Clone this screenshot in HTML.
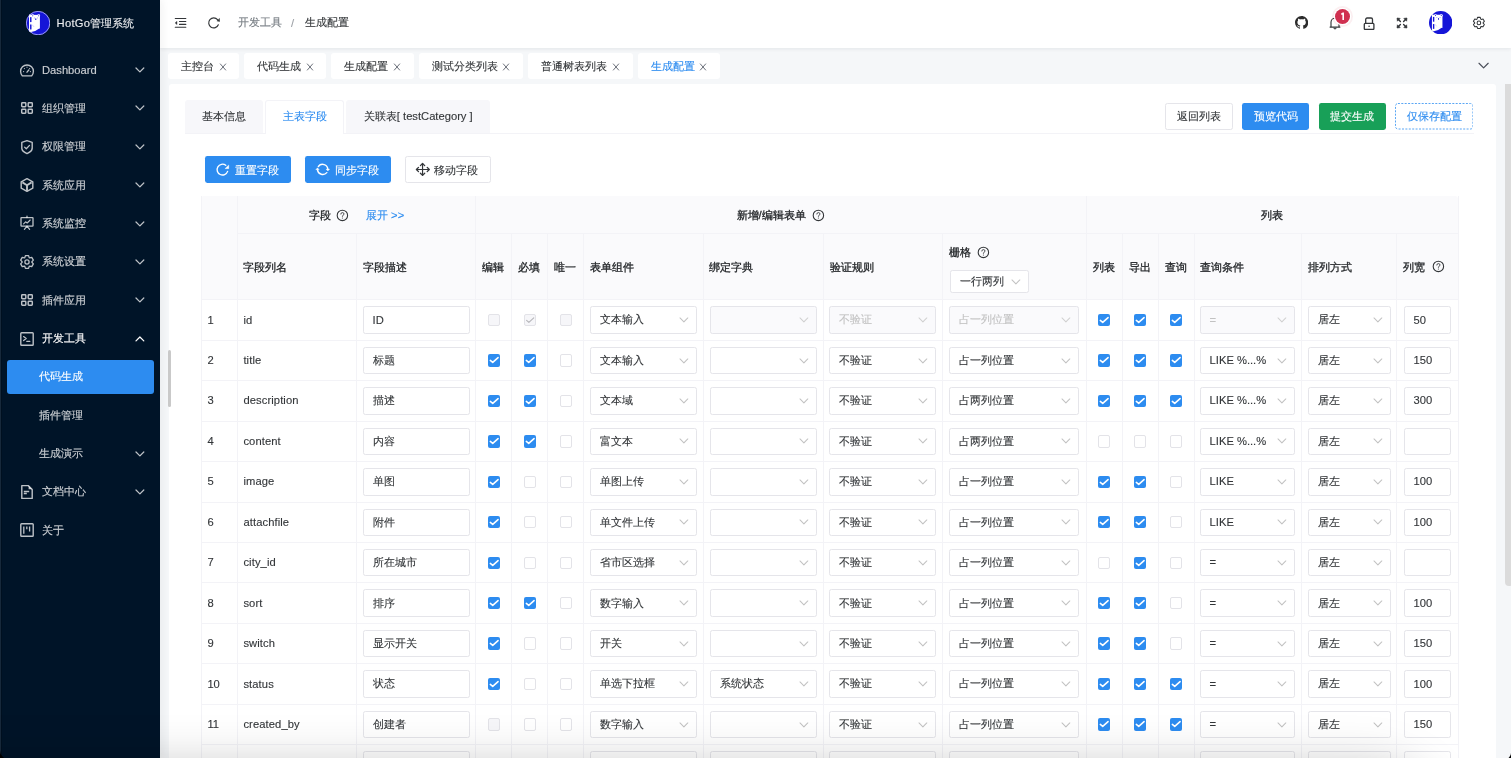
<!DOCTYPE html><html><head><meta charset="utf-8"><title>HotGo</title><style>html,body{margin:0;padding:0;}body{width:1511px;height:758px;overflow:hidden;position:relative;background:#f5f7f9;font-family:"Liberation Sans",sans-serif;font-size:11.2px;color:#333639;}div{box-sizing:border-box;-webkit-text-stroke:0.12px currentColor;}</style></head><body><div style="position:absolute;left:0;top:0;width:1511px;height:758px;will-change:transform;overflow:hidden;">
<div style="position:absolute;left:160px;top:0px;width:1351px;height:758px;background:#f5f7f9;"></div>
<div style="position:absolute;left:169px;top:84px;width:1327px;height:700px;background:#fff;border-radius:3px;"></div>
<div style="position:absolute;left:1505px;top:84px;width:8px;height:502px;background:#dbdbdb;border-radius:0 0 4px 4px;"></div>
<div style="position:absolute;left:160px;top:0px;width:1351px;height:48px;background:#fff;box-shadow:0 1px 4px rgba(0,21,41,0.08);"></div>
<div style="position:absolute;left:0px;top:0px;width:160px;height:758px;background:#001428;box-shadow:2px 0 8px rgba(29,35,41,0.06);"></div>
<svg style="position:absolute;left:25.9px;top:10.8px;" width="24.2" height="24.2" viewBox="0 0 100 100"><defs><clipPath id="lc1"><circle cx="50" cy="50" r="50"/></clipPath></defs><circle cx="50" cy="50" r="50" fill="#1515d8"/><g clip-path="url(#lc1)"><rect x="12.5" y="0" width="4.6" height="100" fill="#fff"/><rect x="16.8" y="16" width="40.7" height="56" fill="#fff"/><path d="M57.5 70 Q42 84 16.8 88 L16.8 68 Z" fill="#fff"/><circle cx="27.8" cy="19.4" r="5.9" fill="#fff"/><circle cx="52.6" cy="19.4" r="5.9" fill="#fff"/><circle cx="27.8" cy="19.4" r="2.3" fill="#1515d8"/><circle cx="52.6" cy="19.4" r="2.3" fill="#1515d8"/><circle cx="33.8" cy="28.7" r="1.5" fill="#1515d8"/><circle cx="47.2" cy="28.7" r="1.5" fill="#1515d8"/><ellipse cx="40.5" cy="33.8" rx="2.4" ry="3.6" fill="#1515d8"/><rect x="16.8" y="25.3" width="5.9" height="20.4" fill="#1515d8"/><rect x="16.8" y="55.8" width="5.9" height="20.5" fill="#1515d8"/><path d="M25 58 Q31 59 33 66" fill="none" stroke="#b8b8ee" stroke-width="2"/></g><circle cx="50" cy="50" r="48.5" fill="none" stroke="rgba(235,235,255,0.75)" stroke-width="3.5"/></svg>
<div style="position:absolute;left:56.6px;top:15.8px;line-height:14px;height:14px;white-space:nowrap;color:#eceef0;font-size:11.2px;"><span style="letter-spacing:0.25px">HotGo</span>管理系统</div>
<svg style="position:absolute;left:19.2px;top:62.85px;" width="16" height="16" viewBox="0 0 16 16"><path d="M3.45 12.9 A6.4 6.4 0 1 1 12.55 12.9 Z" fill="none" stroke="rgba(255,255,255,0.74)" stroke-width="1.4" stroke-linejoin="round"/><path d="M8 9.2 L9.8 7" stroke="rgba(255,255,255,0.74)" stroke-width="1.3" stroke-linecap="round"/><circle cx="8" cy="4.2" r="0.6" fill="rgba(255,255,255,0.74)"/><circle cx="4.6" cy="8.6" r="0.6" fill="rgba(255,255,255,0.74)"/><circle cx="11.4" cy="8.6" r="0.6" fill="rgba(255,255,255,0.74)"/><circle cx="5.4" cy="5.6" r="0.6" fill="rgba(255,255,255,0.74)"/><circle cx="10.6" cy="5.6" r="0.6" fill="rgba(255,255,255,0.74)"/></svg>
<div style="position:absolute;left:42px;top:63px;line-height:14px;height:14px;white-space:nowrap;color:rgba(255,255,255,0.76);">Dashboard</div>
<svg style="position:absolute;left:133.9px;top:64.1px" width="11.8" height="11.8" viewBox="-5.9 -5.9 11.8 11.8"><path d="M-3.9 -1.95 L0 1.95 L3.9 -1.95" fill="none" stroke="rgba(255,255,255,0.74)" stroke-width="1.25" stroke-linecap="round" stroke-linejoin="round"/></svg>
<svg style="position:absolute;left:19.2px;top:100.37px;" width="16" height="16" viewBox="0 0 16 16"><rect x="2.7" y="2.7" width="4.1" height="4.1" rx="0.7" fill="none" stroke="rgba(255,255,255,0.74)" stroke-width="1.45"/><rect x="2.7" y="9.2" width="4.1" height="4.1" rx="0.7" fill="none" stroke="rgba(255,255,255,0.74)" stroke-width="1.45"/><rect x="9.2" y="2.7" width="4.1" height="4.1" rx="0.7" fill="none" stroke="rgba(255,255,255,0.74)" stroke-width="1.45"/><rect x="9.2" y="9.2" width="4.1" height="4.1" rx="0.7" fill="none" stroke="rgba(255,255,255,0.74)" stroke-width="1.45"/></svg>
<div style="position:absolute;left:42px;top:100.77px;line-height:14px;height:14px;white-space:nowrap;color:rgba(255,255,255,0.76);">组织管理</div>
<svg style="position:absolute;left:133.9px;top:102.47px" width="11.8" height="11.8" viewBox="-5.9 -5.9 11.8 11.8"><path d="M-3.9 -1.95 L0 1.95 L3.9 -1.95" fill="none" stroke="rgba(255,255,255,0.74)" stroke-width="1.25" stroke-linecap="round" stroke-linejoin="round"/></svg>
<svg style="position:absolute;left:19.2px;top:138.74px;" width="16" height="16" viewBox="0 0 16 16"><path d="M8 1.6 L13.2 3.4 L13.2 9.4 Q13 12.4 8 14.6 Q3 12.4 2.8 9.4 L2.8 3.4 Z" fill="none" stroke="rgba(255,255,255,0.74)" stroke-width="1.4" stroke-linejoin="round"/><path d="M5.6 8.1 L7.3 9.8 L10.5 6.4" fill="none" stroke="rgba(255,255,255,0.74)" stroke-width="1.3" stroke-linecap="round" stroke-linejoin="round"/></svg>
<div style="position:absolute;left:42px;top:139.14px;line-height:14px;height:14px;white-space:nowrap;color:rgba(255,255,255,0.76);">权限管理</div>
<svg style="position:absolute;left:133.9px;top:140.84px" width="11.8" height="11.8" viewBox="-5.9 -5.9 11.8 11.8"><path d="M-3.9 -1.95 L0 1.95 L3.9 -1.95" fill="none" stroke="rgba(255,255,255,0.74)" stroke-width="1.25" stroke-linecap="round" stroke-linejoin="round"/></svg>
<svg style="position:absolute;left:19.2px;top:177.11px;" width="16" height="16" viewBox="0 0 16 16"><path d="M8 1.6 L13.8 4.8 L13.8 11.2 L8 14.4 L2.2 11.2 L2.2 4.8 Z" fill="none" stroke="rgba(255,255,255,0.74)" stroke-width="1.4" stroke-linejoin="round"/><path d="M3.4 5.4 L8 8.2 L12.6 5.4 M8 8.2 L8 13.6" fill="none" stroke="rgba(255,255,255,0.74)" stroke-width="1.9" stroke-linejoin="round"/></svg>
<div style="position:absolute;left:42px;top:177.51px;line-height:14px;height:14px;white-space:nowrap;color:rgba(255,255,255,0.76);">系统应用</div>
<svg style="position:absolute;left:133.9px;top:179.21px" width="11.8" height="11.8" viewBox="-5.9 -5.9 11.8 11.8"><path d="M-3.9 -1.95 L0 1.95 L3.9 -1.95" fill="none" stroke="rgba(255,255,255,0.74)" stroke-width="1.25" stroke-linecap="round" stroke-linejoin="round"/></svg>
<svg style="position:absolute;left:19.2px;top:215.48px;" width="16" height="16" viewBox="0 0 16 16"><rect x="2" y="2.6" width="12" height="8.6" rx="0.5" fill="none" stroke="rgba(255,255,255,0.74)" stroke-width="1.3"/><path d="M8 1 L8 2.6 M8 11.2 L5.4 14.4 M8 11.2 L10.6 14.4" stroke="rgba(255,255,255,0.74)" stroke-width="1.2" stroke-linecap="round"/><path d="M4.6 8.8 L6.6 6.8 L8.2 8 L11.2 5" fill="none" stroke="rgba(255,255,255,0.74)" stroke-width="1.1" stroke-linecap="round" stroke-linejoin="round"/></svg>
<div style="position:absolute;left:42px;top:215.88px;line-height:14px;height:14px;white-space:nowrap;color:rgba(255,255,255,0.76);">系统监控</div>
<svg style="position:absolute;left:133.9px;top:217.58px" width="11.8" height="11.8" viewBox="-5.9 -5.9 11.8 11.8"><path d="M-3.9 -1.95 L0 1.95 L3.9 -1.95" fill="none" stroke="rgba(255,255,255,0.74)" stroke-width="1.25" stroke-linecap="round" stroke-linejoin="round"/></svg>
<svg style="position:absolute;left:19.2px;top:253.85px;" width="16" height="16" viewBox="0 0 16 16"><path d="M6.43 1.59 L9.57 1.59 L10.18 3.61 L10.71 3.92 L12.77 3.44 L14.34 6.15 L12.89 7.69 L12.89 8.31 L14.34 9.85 L12.77 12.56 L10.71 12.08 L10.18 12.39 L9.57 14.41 L6.43 14.41 L5.82 12.39 L5.29 12.08 L3.23 12.56 L1.66 9.85 L3.11 8.31 L3.11 7.69 L1.66 6.15 L3.23 3.44 L5.29 3.92 L5.82 3.61 Z" fill="none" stroke="rgba(255,255,255,0.74)" stroke-width="1.3" stroke-linejoin="round"/><circle cx="8" cy="8" r="2.1" fill="none" stroke="rgba(255,255,255,0.74)" stroke-width="1.3"/></svg>
<div style="position:absolute;left:42px;top:254.25px;line-height:14px;height:14px;white-space:nowrap;color:rgba(255,255,255,0.76);">系统设置</div>
<svg style="position:absolute;left:133.9px;top:255.95px" width="11.8" height="11.8" viewBox="-5.9 -5.9 11.8 11.8"><path d="M-3.9 -1.95 L0 1.95 L3.9 -1.95" fill="none" stroke="rgba(255,255,255,0.74)" stroke-width="1.25" stroke-linecap="round" stroke-linejoin="round"/></svg>
<svg style="position:absolute;left:19.2px;top:292.22px;" width="16" height="16" viewBox="0 0 16 16"><rect x="2.7" y="2.7" width="4.1" height="4.1" rx="0.7" fill="none" stroke="rgba(255,255,255,0.74)" stroke-width="1.45"/><rect x="2.7" y="9.2" width="4.1" height="4.1" rx="0.7" fill="none" stroke="rgba(255,255,255,0.74)" stroke-width="1.45"/><rect x="9.2" y="2.7" width="4.1" height="4.1" rx="0.7" fill="none" stroke="rgba(255,255,255,0.74)" stroke-width="1.45"/><rect x="9.2" y="9.2" width="4.1" height="4.1" rx="0.7" fill="none" stroke="rgba(255,255,255,0.74)" stroke-width="1.45"/></svg>
<div style="position:absolute;left:42px;top:292.62px;line-height:14px;height:14px;white-space:nowrap;color:rgba(255,255,255,0.76);">插件应用</div>
<svg style="position:absolute;left:133.9px;top:294.32px" width="11.8" height="11.8" viewBox="-5.9 -5.9 11.8 11.8"><path d="M-3.9 -1.95 L0 1.95 L3.9 -1.95" fill="none" stroke="rgba(255,255,255,0.74)" stroke-width="1.25" stroke-linecap="round" stroke-linejoin="round"/></svg>
<svg style="position:absolute;left:19.2px;top:330.59px;" width="16" height="16" viewBox="0 0 16 16"><rect x="1.8" y="1.8" width="12.4" height="12.4" rx="0.8" fill="none" stroke="rgba(255,255,255,0.74)" stroke-width="1.4"/><path d="M4.6 5.6 L7.2 7.6 L4.6 9.6 M7.8 10.4 L10.8 10.4" fill="none" stroke="rgba(255,255,255,0.74)" stroke-width="1.25" stroke-linecap="round" stroke-linejoin="round"/></svg>
<div style="position:absolute;left:42px;top:330.99px;line-height:14px;height:14px;white-space:nowrap;color:#fff;">开发工具</div>
<svg style="position:absolute;left:133.9px;top:332.69px" width="11.8" height="11.8" viewBox="-5.9 -5.9 11.8 11.8"><path d="M-3.9 1.95 L0 -1.95 L3.9 1.95" fill="none" stroke="#fff" stroke-width="1.25" stroke-linecap="round" stroke-linejoin="round"/></svg>
<div style="position:absolute;left:7px;top:360.36px;width:147px;height:33.2px;background:#2d8cf0;border-radius:3px;"></div>
<div style="position:absolute;left:39px;top:369.36px;line-height:14px;height:14px;white-space:nowrap;color:#fff;">代码生成</div>
<div style="position:absolute;left:39px;top:407.73px;line-height:14px;height:14px;white-space:nowrap;color:rgba(255,255,255,0.76);">插件管理</div>
<div style="position:absolute;left:39px;top:446.1px;line-height:14px;height:14px;white-space:nowrap;color:rgba(255,255,255,0.76);">生成演示</div>
<svg style="position:absolute;left:133.9px;top:447.8px" width="11.8" height="11.8" viewBox="-5.9 -5.9 11.8 11.8"><path d="M-3.9 -1.95 L0 1.95 L3.9 -1.95" fill="none" stroke="rgba(255,255,255,0.74)" stroke-width="1.25" stroke-linecap="round" stroke-linejoin="round"/></svg>
<svg style="position:absolute;left:19.2px;top:484.07px;" width="16" height="16" viewBox="0 0 16 16"><path d="M2.8 1.6 L9.2 1.6 L13.2 5.6 L13.2 14.4 L2.8 14.4 Z" fill="none" stroke="rgba(255,255,255,0.74)" stroke-width="1.4" stroke-linejoin="round"/><path d="M9.6 1.8 L9.6 5.2 L13 5.2 Z" fill="rgba(255,255,255,0.74)"/><path d="M4.8 7.4 L10.2 7.4 M4.8 9.4 L7.8 9.4" fill="none" stroke="rgba(255,255,255,0.74)" stroke-width="1.5"/></svg>
<div style="position:absolute;left:42px;top:484.47px;line-height:14px;height:14px;white-space:nowrap;color:rgba(255,255,255,0.76);">文档中心</div>
<svg style="position:absolute;left:133.9px;top:486.17px" width="11.8" height="11.8" viewBox="-5.9 -5.9 11.8 11.8"><path d="M-3.9 -1.95 L0 1.95 L3.9 -1.95" fill="none" stroke="rgba(255,255,255,0.74)" stroke-width="1.25" stroke-linecap="round" stroke-linejoin="round"/></svg>
<svg style="position:absolute;left:19.2px;top:522.44px;" width="16" height="16" viewBox="0 0 16 16"><rect x="1.8" y="1.8" width="12.4" height="12.4" rx="0.8" fill="none" stroke="rgba(255,255,255,0.74)" stroke-width="1.4"/><path d="M4.8 4.6 L4.8 11.8 M7.8 4.6 L7.8 7.2 M10.6 4.6 L10.6 9.6" fill="none" stroke="rgba(255,255,255,0.74)" stroke-width="1.3"/></svg>
<div style="position:absolute;left:42px;top:522.84px;line-height:14px;height:14px;white-space:nowrap;color:rgba(255,255,255,0.76);">关于</div>
<div style="position:absolute;left:168px;top:350px;width:3px;height:57px;background:#c9c9c9;border-radius:2px;"></div>
<svg style="position:absolute;left:170px;top:12px;" width="20" height="20" viewBox="0 0 20 20"><path d="M5.3 6.5 L15.8 6.5 M9.5 9.45 L15.8 9.45 M9.5 12.4 L15.8 12.4 M5.3 15.2 L15.8 15.2" stroke="#333639" stroke-width="1.15" stroke-linecap="round"/><path d="M7 9.3 L7 12.6 L5.1 10.95 Z" fill="#333639" stroke="#333639" stroke-width="0.4" stroke-linejoin="round"/></svg>
<svg style="position:absolute;left:200px;top:12px;" width="20" height="20" viewBox="0 0 20 20"><path d="M18.34 12.77 A5 5 0 1 1 17.53 7.69" fill="none" stroke="#333639" stroke-width="1.15" stroke-linecap="round"/><path d="M16.9 8.9 L19.5 6.4 L19.7 9.4 Z" fill="#333639" stroke="#333639" stroke-width="0.5" stroke-linejoin="round"/></svg>
<div style="position:absolute;left:237.5px;top:15.1px;line-height:14px;height:14px;white-space:nowrap;color:#767c82;">开发工具</div>
<div style="position:absolute;left:291px;top:15.7px;line-height:14px;height:14px;white-space:nowrap;color:#9a9ea4;">/</div>
<div style="position:absolute;left:305px;top:15.1px;line-height:14px;height:14px;white-space:nowrap;color:#333639;">生成配置</div>
<svg style="position:absolute;left:1294.8px;top:16.2px;" width="13.2" height="13.2" viewBox="0 0 16 16"><path fill="#2c2c2c" d="M8 0C3.58 0 0 3.58 0 8c0 3.54 2.29 6.53 5.47 7.59.4.07.55-.17.55-.38 0-.19-.01-.82-.01-1.49-2.01.37-2.53-.49-2.69-.94-.09-.23-.48-.94-.82-1.13-.28-.15-.68-.52-.01-.53.63-.01 1.08.58 1.23.82.72 1.21 1.87.87 2.33.66.07-.52.28-.87.51-1.07-1.78-.2-3.64-.89-3.64-3.95 0-.87.31-1.59.82-2.15-.08-.2-.36-1.02.08-2.12 0 0 .67-.21 2.2.82.64-.18 1.32-.27 2-.27.68 0 1.36.09 2 .27 1.53-1.04 2.2-.82 2.2-.82.44 1.1.16 1.92.08 2.12.51.56.82 1.27.82 2.15 0 3.07-1.87 3.75-3.65 3.95.29.25.54.73.54 1.48 0 1.07-.01 1.93-.01 2.2 0 .21.15.46.55.38A8.013 8.013 0 0016 8c0-4.42-3.58-8-8-8z"/></svg>
<svg style="position:absolute;left:1328px;top:14px;" width="14" height="16" viewBox="0 0 14 16"><path d="M3 13.1 L3 8.2 A4 4 0 0 1 11 8.2 L11 13.1" fill="none" stroke="#333639" stroke-width="1.15"/><path d="M2.1 13.1 L11.9 13.1" stroke="#333639" stroke-width="1.2" stroke-linecap="round"/><path d="M5.6 14.2 L7 15.2 L8.4 14.2 Z" fill="#333639" stroke="#333639" stroke-width="0.6" stroke-linejoin="round"/></svg>
<div style="position:absolute;left:1334.9px;top:9.1px;width:15.2px;height:15.2px;background:#d03050;border-radius:50%;box-shadow:0 0 0 1.2px #fff, 0 0 0 3px rgba(208,48,80,0.08);"><svg width="15.2" height="15.2" viewBox="0 0 15.2 15.2" style="position:absolute;left:0;top:0"><path d="M6.3 5.4 L8.2 4.1 L8.2 10.9" fill="none" stroke="#fff" stroke-width="1.6" stroke-linejoin="round"/></svg></div>
<svg style="position:absolute;left:1361.5px;top:15.6px;" width="14" height="14" viewBox="0 0 14 14"><rect x="2.3" y="7.3" width="9.6" height="6.2" rx="1" fill="none" stroke="#333639" stroke-width="1.3"/><path d="M3.7 7.3 L3.7 3.4 A1.4 1.4 0 0 1 5.1 2 L9.1 2 A1.4 1.4 0 0 1 10.5 3.4 L10.5 7.3" fill="none" stroke="#333639" stroke-width="1.3"/><circle cx="7.1" cy="10.3" r="0.8" fill="#333639"/></svg>
<svg style="position:absolute;left:1394px;top:14.85px;" width="16" height="16" viewBox="0 0 16 16"><path d="M6.4 6.4 L4 4 M9.6 6.4 L12 4 M6.4 9.6 L4 12 M9.6 9.6 L12 12" stroke="#333639" stroke-width="1.4" stroke-linecap="round"/><path d="M3 3 L6.2 3.4 L3.4 6.2 Z M13 3 L9.8 3.4 L12.6 6.2 Z M3 13 L6.2 12.6 L3.4 9.8 Z M13 13 L9.8 12.6 L12.6 9.8 Z" fill="#333639" stroke="#333639" stroke-width="0.6" stroke-linejoin="round"/></svg>
<svg style="position:absolute;left:1428.95px;top:10.75px;" width="23.4" height="23.4" viewBox="0 0 100 100"><defs><clipPath id="lc2"><circle cx="50" cy="50" r="50"/></clipPath></defs><circle cx="50" cy="50" r="50" fill="#1515d8"/><g clip-path="url(#lc2)"><rect x="12.5" y="0" width="4.6" height="100" fill="#fff"/><rect x="16.8" y="16" width="40.7" height="56" fill="#fff"/><path d="M57.5 70 Q42 84 16.8 88 L16.8 68 Z" fill="#fff"/><circle cx="27.8" cy="19.4" r="5.9" fill="#fff"/><circle cx="52.6" cy="19.4" r="5.9" fill="#fff"/><circle cx="27.8" cy="19.4" r="2.3" fill="#1515d8"/><circle cx="52.6" cy="19.4" r="2.3" fill="#1515d8"/><circle cx="33.8" cy="28.7" r="1.5" fill="#1515d8"/><circle cx="47.2" cy="28.7" r="1.5" fill="#1515d8"/><ellipse cx="40.5" cy="33.8" rx="2.4" ry="3.6" fill="#1515d8"/><rect x="16.8" y="25.3" width="5.9" height="20.4" fill="#1515d8"/><rect x="16.8" y="55.8" width="5.9" height="20.5" fill="#1515d8"/><path d="M25 58 Q31 59 33 66" fill="none" stroke="#b8b8ee" stroke-width="2"/></g></svg>
<svg style="position:absolute;left:1472px;top:16.2px;" width="13.8" height="13.8" viewBox="0 0 16 16"><path d="M6.43 1.59 L9.57 1.59 L10.18 3.61 L10.71 3.92 L12.77 3.44 L14.34 6.15 L12.89 7.69 L12.89 8.31 L14.34 9.85 L12.77 12.56 L10.71 12.08 L10.18 12.39 L9.57 14.41 L6.43 14.41 L5.82 12.39 L5.29 12.08 L3.23 12.56 L1.66 9.85 L3.11 8.31 L3.11 7.69 L1.66 6.15 L3.23 3.44 L5.29 3.92 L5.82 3.61 Z" fill="none" stroke="#333639" stroke-width="1.2" stroke-linejoin="round"/><circle cx="8" cy="8" r="2.1" fill="none" stroke="#333639" stroke-width="1.2"/></svg>
<div style="position:absolute;left:168.1px;top:53.2px;width:70.9px;height:25.6px;background:#fff;border-radius:3px;"></div>
<div style="position:absolute;left:181.3px;top:58.8px;line-height:14px;height:14px;white-space:nowrap;color:#333639;">主控台</div>
<svg style="position:absolute;left:217.65px;top:61.9px;" width="10" height="10" viewBox="0 0 10 10"><path d="M2.35 1.95 L7.65 8.05 M7.65 1.95 L2.35 8.05" stroke="#6c717b" stroke-width="1" stroke-linecap="round"/></svg>
<div style="position:absolute;left:244.2px;top:53.2px;width:82.2px;height:25.6px;background:#fff;border-radius:3px;"></div>
<div style="position:absolute;left:257.4px;top:58.8px;line-height:14px;height:14px;white-space:nowrap;color:#333639;">代码生成</div>
<svg style="position:absolute;left:305.05px;top:61.9px;" width="10" height="10" viewBox="0 0 10 10"><path d="M2.35 1.95 L7.65 8.05 M7.65 1.95 L2.35 8.05" stroke="#6c717b" stroke-width="1" stroke-linecap="round"/></svg>
<div style="position:absolute;left:331px;top:53.2px;width:82.7px;height:25.6px;background:#fff;border-radius:3px;"></div>
<div style="position:absolute;left:344.2px;top:58.8px;line-height:14px;height:14px;white-space:nowrap;color:#333639;">生成配置</div>
<svg style="position:absolute;left:392.35px;top:61.9px;" width="10" height="10" viewBox="0 0 10 10"><path d="M2.35 1.95 L7.65 8.05 M7.65 1.95 L2.35 8.05" stroke="#6c717b" stroke-width="1" stroke-linecap="round"/></svg>
<div style="position:absolute;left:418.9px;top:53.2px;width:103.8px;height:25.6px;background:#fff;border-radius:3px;"></div>
<div style="position:absolute;left:432.1px;top:58.8px;line-height:14px;height:14px;white-space:nowrap;color:#333639;">测试分类列表</div>
<svg style="position:absolute;left:501.35px;top:61.9px;" width="10" height="10" viewBox="0 0 10 10"><path d="M2.35 1.95 L7.65 8.05 M7.65 1.95 L2.35 8.05" stroke="#6c717b" stroke-width="1" stroke-linecap="round"/></svg>
<div style="position:absolute;left:528.2px;top:53.2px;width:104.6px;height:25.6px;background:#fff;border-radius:3px;"></div>
<div style="position:absolute;left:541.4px;top:58.8px;line-height:14px;height:14px;white-space:nowrap;color:#333639;">普通树表列表</div>
<svg style="position:absolute;left:611.45px;top:61.9px;" width="10" height="10" viewBox="0 0 10 10"><path d="M2.35 1.95 L7.65 8.05 M7.65 1.95 L2.35 8.05" stroke="#6c717b" stroke-width="1" stroke-linecap="round"/></svg>
<div style="position:absolute;left:637.7px;top:53.2px;width:81.9px;height:25.6px;background:#fff;border-radius:3px;"></div>
<div style="position:absolute;left:650.9px;top:58.8px;line-height:14px;height:14px;white-space:nowrap;color:#2d8cf0;">生成配置</div>
<svg style="position:absolute;left:698.25px;top:61.9px;" width="10" height="10" viewBox="0 0 10 10"><path d="M2.35 1.95 L7.65 8.05 M7.65 1.95 L2.35 8.05" stroke="#6c717b" stroke-width="1" stroke-linecap="round"/></svg>
<svg style="position:absolute;left:1477px;top:59.2px" width="13.2" height="13.2" viewBox="-6.6 -6.6 13.2 13.2"><path d="M-4.6 -2.3 L0 2.3 L4.6 -2.3" fill="none" stroke="#4a4f5a" stroke-width="1.2" stroke-linecap="round" stroke-linejoin="round"/></svg>
<div style="position:absolute;left:185px;top:133px;width:1288.5px;height:1px;background:#f3f3f7;"></div>
<div style="position:absolute;left:184.7px;top:99.7px;width:78.1px;height:33.3px;background:#f7f7fa;border-radius:3px 3px 0 0;"></div>
<div style="position:absolute;left:73.75px;top:109.2px;width:300px;text-align:center;line-height:14px;height:14px;white-space:nowrap;color:#333639;">基本信息</div>
<div style="position:absolute;left:265.3px;top:99.7px;width:78.6px;height:34.3px;background:#fff;border:1px solid #f3f3f7;border-bottom:none;border-radius:3px 3px 0 0;"></div>
<div style="position:absolute;left:154.6px;top:109.2px;width:300px;text-align:center;line-height:14px;height:14px;white-space:nowrap;color:#2d8cf0;">主表字段</div>
<div style="position:absolute;left:346.4px;top:99.7px;width:143.7px;height:33.3px;background:#f7f7fa;border-radius:3px 3px 0 0;"></div>
<div style="position:absolute;left:268.25px;top:109.2px;width:300px;text-align:center;line-height:14px;height:14px;white-space:nowrap;color:#333639;">关联表[ testCategory ]</div>
<div style="position:absolute;left:1165.3px;top:103px;width:67.3px;height:26.5px;background:#fff;border:1px solid #e5e5ea;border-radius:2.4px;"></div>
<div style="position:absolute;left:1048.95px;top:108.7px;width:300px;text-align:center;line-height:14px;height:14px;white-space:nowrap;color:#333639;">返回列表</div>
<div style="position:absolute;left:1242px;top:103px;width:67.3px;height:26.5px;background:#2d8cf0;border-radius:2.4px;"></div>
<div style="position:absolute;left:1125.65px;top:108.7px;width:300px;text-align:center;line-height:14px;height:14px;white-space:nowrap;color:#fff;">预览代码</div>
<div style="position:absolute;left:1318.8px;top:103px;width:67.2px;height:26.5px;background:#18a058;border-radius:2.4px;"></div>
<div style="position:absolute;left:1202.4px;top:108.7px;width:300px;text-align:center;line-height:14px;height:14px;white-space:nowrap;color:#fff;">提交生成</div>
<div style="position:absolute;left:1395px;top:103px;width:78.4px;height:26.5px;background:#fff;"><svg width="78.4" height="26.5" style="position:absolute;left:0;top:0"><rect x="0.5" y="0.5" width="77.4" height="25.5" rx="2.4" fill="none" stroke="#5aa6f4" stroke-width="1" stroke-dasharray="2 1.4"/></svg></div>
<div style="position:absolute;left:1284.2px;top:108.7px;width:300px;text-align:center;line-height:14px;height:14px;white-space:nowrap;color:#2d8cf0;">仅保存配置</div>
<div style="position:absolute;left:204.7px;top:156.1px;width:86.2px;height:27.2px;background:#2d8cf0;border-radius:2.4px;"></div>
<svg style="position:absolute;left:213px;top:160px;" width="20" height="20" viewBox="0 0 20 20"><path d="M14.61 11.36 A5.4 5.4 0 1 1 12.75 5.29" fill="none" stroke="#fff" stroke-width="1.35" stroke-linecap="round"/><path d="M15.8 4.9 L15.8 8.7 L11.9 8.7 Z" fill="#fff" stroke="#fff" stroke-width="0.3" stroke-linejoin="round"/></svg>
<div style="position:absolute;left:235.4px;top:163.1px;line-height:14px;height:14px;white-space:nowrap;color:#fff;">重置字段</div>
<div style="position:absolute;left:304.6px;top:156.1px;width:86.2px;height:27.2px;background:#2d8cf0;border-radius:2.4px;"></div>
<svg style="position:absolute;left:312px;top:160px;" width="20" height="20" viewBox="0 0 20 20"><path d="M6.3 6.5 A5.3 5.3 0 0 1 15.85 9.4" fill="none" stroke="#fff" stroke-width="1.35" stroke-linecap="round"/><path d="M14.8 12.6 A5.3 5.3 0 0 1 5.5 9.8" fill="none" stroke="#fff" stroke-width="1.35" stroke-linecap="round"/><path d="M14.1 9.1 L17.6 9.1 L15.85 11 Z M3.8 9.7 L7.2 9.7 L5.5 7.8 Z" fill="#fff" stroke="#fff" stroke-width="0.4" stroke-linejoin="round"/></svg>
<div style="position:absolute;left:335.4px;top:163.1px;line-height:14px;height:14px;white-space:nowrap;color:#fff;">同步字段</div>
<div style="position:absolute;left:404.5px;top:156.1px;width:86.2px;height:27.2px;background:#fff;border:1px solid #e5e5ea;border-radius:2.4px;"></div>
<svg style="position:absolute;left:412px;top:160px;" width="20" height="20" viewBox="0 0 20 20"><path d="M10.55 3.5 L10.55 15.4 M4.5 9.5 L17.2 9.5" stroke="#333639" stroke-width="1.2"/><path d="M8.4 5.6 L10.55 3.5 L12.7 5.6 M8.4 13.3 L10.55 15.4 L12.7 13.3 M6.5 7.35 L4.4 9.5 L6.5 11.65 M15.2 7.35 L17.3 9.5 L15.2 11.65" fill="none" stroke="#333639" stroke-width="1.3" stroke-linecap="round" stroke-linejoin="round"/></svg>
<div style="position:absolute;left:434.4px;top:163.1px;line-height:14px;height:14px;white-space:nowrap;color:#333639;">移动字段</div>
<div style="position:absolute;left:201px;top:196.3px;width:1257px;height:103.5px;background:#fafafc;border-radius:3px 3px 0 0;"></div>
<div style="position:absolute;left:237px;top:233px;width:1221px;height:1px;background:#f3f3f7;"></div>
<div style="position:absolute;left:201px;top:299px;width:1257px;height:1px;background:#f3f3f7;"></div>
<div style="position:absolute;left:201px;top:340px;width:1257px;height:1px;background:#f3f3f7;"></div>
<div style="position:absolute;left:201px;top:380px;width:1257px;height:1px;background:#f3f3f7;"></div>
<div style="position:absolute;left:201px;top:421px;width:1257px;height:1px;background:#f3f3f7;"></div>
<div style="position:absolute;left:201px;top:461px;width:1257px;height:1px;background:#f3f3f7;"></div>
<div style="position:absolute;left:201px;top:502px;width:1257px;height:1px;background:#f3f3f7;"></div>
<div style="position:absolute;left:201px;top:542px;width:1257px;height:1px;background:#f3f3f7;"></div>
<div style="position:absolute;left:201px;top:582px;width:1257px;height:1px;background:#f3f3f7;"></div>
<div style="position:absolute;left:201px;top:623px;width:1257px;height:1px;background:#f3f3f7;"></div>
<div style="position:absolute;left:201px;top:663px;width:1257px;height:1px;background:#f3f3f7;"></div>
<div style="position:absolute;left:201px;top:704px;width:1257px;height:1px;background:#f3f3f7;"></div>
<div style="position:absolute;left:201px;top:744px;width:1257px;height:1px;background:#f3f3f7;"></div>
<div style="position:absolute;left:201px;top:785px;width:1257px;height:1px;background:#f3f3f7;"></div>
<div style="position:absolute;left:201px;top:196px;width:1px;height:589px;background:#f3f3f7;"></div>
<div style="position:absolute;left:237px;top:196px;width:1px;height:589px;background:#f3f3f7;"></div>
<div style="position:absolute;left:475px;top:196px;width:1px;height:589px;background:#f3f3f7;"></div>
<div style="position:absolute;left:1086px;top:196px;width:1px;height:589px;background:#f3f3f7;"></div>
<div style="position:absolute;left:1458px;top:196px;width:1px;height:589px;background:#f3f3f7;"></div>
<div style="position:absolute;left:356px;top:233px;width:1px;height:552px;background:#f3f3f7;"></div>
<div style="position:absolute;left:511px;top:233px;width:1px;height:552px;background:#f3f3f7;"></div>
<div style="position:absolute;left:547px;top:233px;width:1px;height:552px;background:#f3f3f7;"></div>
<div style="position:absolute;left:583px;top:233px;width:1px;height:552px;background:#f3f3f7;"></div>
<div style="position:absolute;left:703px;top:233px;width:1px;height:552px;background:#f3f3f7;"></div>
<div style="position:absolute;left:823px;top:233px;width:1px;height:552px;background:#f3f3f7;"></div>
<div style="position:absolute;left:942px;top:233px;width:1px;height:552px;background:#f3f3f7;"></div>
<div style="position:absolute;left:1122px;top:233px;width:1px;height:552px;background:#f3f3f7;"></div>
<div style="position:absolute;left:1158px;top:233px;width:1px;height:552px;background:#f3f3f7;"></div>
<div style="position:absolute;left:1194px;top:233px;width:1px;height:552px;background:#f3f3f7;"></div>
<div style="position:absolute;left:1301px;top:233px;width:1px;height:552px;background:#f3f3f7;"></div>
<div style="position:absolute;left:1396px;top:233px;width:1px;height:552px;background:#f3f3f7;"></div>
<div style="position:absolute;left:308.6px;top:208px;line-height:14px;height:14px;white-space:nowrap;color:#1f2225;-webkit-text-stroke:0.3px #1f2225;">字段</div>
<svg style="position:absolute;left:336px;top:209.2px;" width="12.8" height="12.8" viewBox="0 0 16 16"><circle cx="8" cy="8" r="6.5" fill="none" stroke="#333639" stroke-width="1.35"/><path d="M6 6.3 Q6 4.5 8 4.5 Q10 4.5 10 6.2 Q10 7.3 8.8 7.8 Q8 8.2 8 9.2" fill="none" stroke="#333639" stroke-width="1.1" stroke-linecap="round"/><circle cx="8" cy="11.2" r="0.7" fill="#333639"/></svg>
<div style="position:absolute;left:366px;top:208px;line-height:14px;height:14px;white-space:nowrap;color:#2d8cf0;">展开 &gt;&gt;</div>
<div style="position:absolute;left:736.6px;top:208px;line-height:14px;height:14px;white-space:nowrap;color:#1f2225;-webkit-text-stroke:0.3px #1f2225;">新增/编辑表单</div>
<svg style="position:absolute;left:812.1px;top:209.2px;" width="12.8" height="12.8" viewBox="0 0 16 16"><circle cx="8" cy="8" r="6.5" fill="none" stroke="#333639" stroke-width="1.35"/><path d="M6 6.3 Q6 4.5 8 4.5 Q10 4.5 10 6.2 Q10 7.3 8.8 7.8 Q8 8.2 8 9.2" fill="none" stroke="#333639" stroke-width="1.1" stroke-linecap="round"/><circle cx="8" cy="11.2" r="0.7" fill="#333639"/></svg>
<div style="position:absolute;left:1122.2px;top:208px;width:300px;text-align:center;line-height:14px;height:14px;white-space:nowrap;color:#1f2225;-webkit-text-stroke:0.3px #1f2225;">列表</div>
<div style="position:absolute;left:243.4px;top:259.9px;line-height:14px;height:14px;white-space:nowrap;color:#1f2225;-webkit-text-stroke:0.3px #1f2225;">字段列名</div>
<div style="position:absolute;left:363.1px;top:259.9px;line-height:14px;height:14px;white-space:nowrap;color:#1f2225;-webkit-text-stroke:0.3px #1f2225;">字段描述</div>
<div style="position:absolute;left:481.9px;top:259.9px;line-height:14px;height:14px;white-space:nowrap;color:#1f2225;-webkit-text-stroke:0.3px #1f2225;">编辑</div>
<div style="position:absolute;left:517.7px;top:259.9px;line-height:14px;height:14px;white-space:nowrap;color:#1f2225;-webkit-text-stroke:0.3px #1f2225;">必填</div>
<div style="position:absolute;left:553.8px;top:259.9px;line-height:14px;height:14px;white-space:nowrap;color:#1f2225;-webkit-text-stroke:0.3px #1f2225;">唯一</div>
<div style="position:absolute;left:589.7px;top:259.9px;line-height:14px;height:14px;white-space:nowrap;color:#1f2225;-webkit-text-stroke:0.3px #1f2225;">表单组件</div>
<div style="position:absolute;left:709.4px;top:259.9px;line-height:14px;height:14px;white-space:nowrap;color:#1f2225;-webkit-text-stroke:0.3px #1f2225;">绑定字典</div>
<div style="position:absolute;left:829.6px;top:259.9px;line-height:14px;height:14px;white-space:nowrap;color:#1f2225;-webkit-text-stroke:0.3px #1f2225;">验证规则</div>
<div style="position:absolute;left:1092.8px;top:259.9px;line-height:14px;height:14px;white-space:nowrap;color:#1f2225;-webkit-text-stroke:0.3px #1f2225;">列表</div>
<div style="position:absolute;left:1128.8px;top:259.9px;line-height:14px;height:14px;white-space:nowrap;color:#1f2225;-webkit-text-stroke:0.3px #1f2225;">导出</div>
<div style="position:absolute;left:1164.5px;top:259.9px;line-height:14px;height:14px;white-space:nowrap;color:#1f2225;-webkit-text-stroke:0.3px #1f2225;">查询</div>
<div style="position:absolute;left:1200.4px;top:259.9px;line-height:14px;height:14px;white-space:nowrap;color:#1f2225;-webkit-text-stroke:0.3px #1f2225;">查询条件</div>
<div style="position:absolute;left:1308px;top:259.9px;line-height:14px;height:14px;white-space:nowrap;color:#1f2225;-webkit-text-stroke:0.3px #1f2225;">排列方式</div>
<div style="position:absolute;left:1403px;top:259.9px;line-height:14px;height:14px;white-space:nowrap;color:#1f2225;-webkit-text-stroke:0.3px #1f2225;">列宽</div>
<svg style="position:absolute;left:1432.2px;top:260.2px;" width="12.8" height="12.8" viewBox="0 0 16 16"><circle cx="8" cy="8" r="6.5" fill="none" stroke="#333639" stroke-width="1.35"/><path d="M6 6.3 Q6 4.5 8 4.5 Q10 4.5 10 6.2 Q10 7.3 8.8 7.8 Q8 8.2 8 9.2" fill="none" stroke="#333639" stroke-width="1.1" stroke-linecap="round"/><circle cx="8" cy="11.2" r="0.7" fill="#333639"/></svg>
<div style="position:absolute;left:948.7px;top:244.9px;line-height:14px;height:14px;white-space:nowrap;color:#1f2225;-webkit-text-stroke:0.3px #1f2225;">栅格</div>
<svg style="position:absolute;left:977.2px;top:246.1px;" width="12.8" height="12.8" viewBox="0 0 16 16"><circle cx="8" cy="8" r="6.5" fill="none" stroke="#333639" stroke-width="1.35"/><path d="M6 6.3 Q6 4.5 8 4.5 Q10 4.5 10 6.2 Q10 7.3 8.8 7.8 Q8 8.2 8 9.2" fill="none" stroke="#333639" stroke-width="1.1" stroke-linecap="round"/><circle cx="8" cy="11.2" r="0.7" fill="#333639"/></svg>
<div style="position:absolute;left:949.7px;top:270.4px;width:79.7px;height:22.4px;box-sizing:border-box;border:1px solid #e5e5ea;border-radius:2.4px;background:#fff;"></div>
<div style="position:absolute;left:959.8px;top:274px;line-height:14px;height:14px;white-space:nowrap;color:#333639;">一行两列</div>
<svg style="position:absolute;left:1009.9px;top:275.7px" width="11.8" height="11.8" viewBox="-5.9 -5.9 11.8 11.8"><path d="M-3.9 -1.95 L0 1.95 L3.9 -1.95" fill="none" stroke="#c2c2c2" stroke-width="1.05" stroke-linecap="round" stroke-linejoin="round"/></svg>
<div style="position:absolute;left:207.4px;top:312.53px;line-height:14px;height:14px;white-space:nowrap;">1</div>
<div style="position:absolute;left:243.4px;top:312.53px;line-height:14px;height:14px;white-space:nowrap;letter-spacing:0.1px;">id</div>
<div style="position:absolute;left:363px;top:306.33px;width:107px;height:27.4px;box-sizing:border-box;border:1px solid #e5e5ea;border-radius:2.4px;background:#fff;"></div>
<div style="position:absolute;left:372.6px;top:312.53px;line-height:14px;height:14px;white-space:nowrap;color:#333639;">ID</div>
<div style="position:absolute;left:487.7px;top:313.83px;width:12.4px;height:12.4px;box-sizing:border-box;border:1px solid #e3e3e8;border-radius:2px;background:#f6f6f9;"></div>
<div style="position:absolute;left:523.65px;top:313.83px;width:12.4px;height:12.4px;box-sizing:border-box;border:1px solid #e3e3e8;border-radius:2px;background:#f6f6f9;"><svg width="12.4" height="12.4" viewBox="0 0 16 16" style="position:absolute;left:-1px;top:-1px"><path d="M3.4 8.3 L6.3 10.8 L12.6 5" fill="none" stroke="#b4b4b8" stroke-width="1.4" stroke-linecap="round" stroke-linejoin="round"/></svg></div>
<div style="position:absolute;left:559.65px;top:313.83px;width:12.4px;height:12.4px;box-sizing:border-box;border:1px solid #e3e3e8;border-radius:2px;background:#f6f6f9;"></div>
<div style="position:absolute;left:1097.9px;top:313.83px;width:12.4px;height:12.4px;background:#2d8cf0;border-radius:2px;"><svg width="12.4" height="12.4" viewBox="0 0 16 16" style="position:absolute;left:0;top:0"><path d="M3 8.3 L6.1 10.9 L13 4.6" fill="none" stroke="#fff" stroke-width="2" stroke-linecap="round" stroke-linejoin="round"/></svg></div>
<div style="position:absolute;left:1133.75px;top:313.83px;width:12.4px;height:12.4px;background:#2d8cf0;border-radius:2px;"><svg width="12.4" height="12.4" viewBox="0 0 16 16" style="position:absolute;left:0;top:0"><path d="M3 8.3 L6.1 10.9 L13 4.6" fill="none" stroke="#fff" stroke-width="2" stroke-linecap="round" stroke-linejoin="round"/></svg></div>
<div style="position:absolute;left:1169.55px;top:313.83px;width:12.4px;height:12.4px;background:#2d8cf0;border-radius:2px;"><svg width="12.4" height="12.4" viewBox="0 0 16 16" style="position:absolute;left:0;top:0"><path d="M3 8.3 L6.1 10.9 L13 4.6" fill="none" stroke="#fff" stroke-width="2" stroke-linecap="round" stroke-linejoin="round"/></svg></div>
<div style="position:absolute;left:590px;top:306.33px;width:107px;height:27.4px;box-sizing:border-box;border:1px solid #e5e5ea;border-radius:2.4px;background:#fff;"></div>
<div style="position:absolute;left:600.1px;top:312.43px;line-height:14px;height:14px;white-space:nowrap;color:#333639;">文本输入</div>
<svg style="position:absolute;left:677.5px;top:314.13px" width="11.8" height="11.8" viewBox="-5.9 -5.9 11.8 11.8"><path d="M-3.9 -1.95 L0 1.95 L3.9 -1.95" fill="none" stroke="#c2c2c2" stroke-width="1.05" stroke-linecap="round" stroke-linejoin="round"/></svg>
<div style="position:absolute;left:710px;top:306.33px;width:107px;height:27.4px;box-sizing:border-box;border:1px solid #e5e5ea;border-radius:2.4px;background:#fafafc;"></div>
<svg style="position:absolute;left:797.5px;top:314.13px" width="11.8" height="11.8" viewBox="-5.9 -5.9 11.8 11.8"><path d="M-3.9 -1.95 L0 1.95 L3.9 -1.95" fill="none" stroke="#d0d0d0" stroke-width="1.05" stroke-linecap="round" stroke-linejoin="round"/></svg>
<div style="position:absolute;left:829px;top:306.33px;width:107px;height:27.4px;box-sizing:border-box;border:1px solid #e5e5ea;border-radius:2.4px;background:#fafafc;"></div>
<div style="position:absolute;left:839.1px;top:312.43px;line-height:14px;height:14px;white-space:nowrap;color:#c2c2c2;">不验证</div>
<svg style="position:absolute;left:916.5px;top:314.13px" width="11.8" height="11.8" viewBox="-5.9 -5.9 11.8 11.8"><path d="M-3.9 -1.95 L0 1.95 L3.9 -1.95" fill="none" stroke="#d0d0d0" stroke-width="1.05" stroke-linecap="round" stroke-linejoin="round"/></svg>
<div style="position:absolute;left:949px;top:306.33px;width:130px;height:27.4px;box-sizing:border-box;border:1px solid #e5e5ea;border-radius:2.4px;background:#fafafc;"></div>
<div style="position:absolute;left:959.1px;top:312.43px;line-height:14px;height:14px;white-space:nowrap;color:#c2c2c2;">占一列位置</div>
<svg style="position:absolute;left:1059.5px;top:314.13px" width="11.8" height="11.8" viewBox="-5.9 -5.9 11.8 11.8"><path d="M-3.9 -1.95 L0 1.95 L3.9 -1.95" fill="none" stroke="#d0d0d0" stroke-width="1.05" stroke-linecap="round" stroke-linejoin="round"/></svg>
<div style="position:absolute;left:1200px;top:306.33px;width:95px;height:27.4px;box-sizing:border-box;border:1px solid #e5e5ea;border-radius:2.4px;background:#fafafc;"></div>
<div style="position:absolute;left:1209.6px;top:312.53px;line-height:14px;height:14px;white-space:nowrap;color:#c2c2c2;">=</div>
<svg style="position:absolute;left:1275.5px;top:314.13px" width="11.8" height="11.8" viewBox="-5.9 -5.9 11.8 11.8"><path d="M-3.9 -1.95 L0 1.95 L3.9 -1.95" fill="none" stroke="#d0d0d0" stroke-width="1.05" stroke-linecap="round" stroke-linejoin="round"/></svg>
<div style="position:absolute;left:1308px;top:306.33px;width:83px;height:27.4px;box-sizing:border-box;border:1px solid #e5e5ea;border-radius:2.4px;background:#fff;"></div>
<div style="position:absolute;left:1318.1px;top:312.43px;line-height:14px;height:14px;white-space:nowrap;color:#333639;">居左</div>
<svg style="position:absolute;left:1371.5px;top:314.13px" width="11.8" height="11.8" viewBox="-5.9 -5.9 11.8 11.8"><path d="M-3.9 -1.95 L0 1.95 L3.9 -1.95" fill="none" stroke="#c2c2c2" stroke-width="1.05" stroke-linecap="round" stroke-linejoin="round"/></svg>
<div style="position:absolute;left:1404px;top:306.33px;width:47px;height:27.4px;box-sizing:border-box;border:1px solid #e5e5ea;border-radius:2.4px;background:#fff;"></div>
<div style="position:absolute;left:1413.6px;top:312.53px;line-height:14px;height:14px;white-space:nowrap;color:#333639;">50</div>
<div style="position:absolute;left:207.4px;top:352.98px;line-height:14px;height:14px;white-space:nowrap;">2</div>
<div style="position:absolute;left:243.4px;top:352.98px;line-height:14px;height:14px;white-space:nowrap;letter-spacing:0.1px;">title</div>
<div style="position:absolute;left:363px;top:346.78px;width:107px;height:27.4px;box-sizing:border-box;border:1px solid #e5e5ea;border-radius:2.4px;background:#fff;"></div>
<div style="position:absolute;left:373.1px;top:352.88px;line-height:14px;height:14px;white-space:nowrap;color:#333639;">标题</div>
<div style="position:absolute;left:487.7px;top:354.28px;width:12.4px;height:12.4px;background:#2d8cf0;border-radius:2px;"><svg width="12.4" height="12.4" viewBox="0 0 16 16" style="position:absolute;left:0;top:0"><path d="M3 8.3 L6.1 10.9 L13 4.6" fill="none" stroke="#fff" stroke-width="2" stroke-linecap="round" stroke-linejoin="round"/></svg></div>
<div style="position:absolute;left:523.65px;top:354.28px;width:12.4px;height:12.4px;background:#2d8cf0;border-radius:2px;"><svg width="12.4" height="12.4" viewBox="0 0 16 16" style="position:absolute;left:0;top:0"><path d="M3 8.3 L6.1 10.9 L13 4.6" fill="none" stroke="#fff" stroke-width="2" stroke-linecap="round" stroke-linejoin="round"/></svg></div>
<div style="position:absolute;left:559.65px;top:354.28px;width:12.4px;height:12.4px;box-sizing:border-box;border:1px solid #e3e3e8;border-radius:2px;background:#fff;"></div>
<div style="position:absolute;left:1097.9px;top:354.28px;width:12.4px;height:12.4px;background:#2d8cf0;border-radius:2px;"><svg width="12.4" height="12.4" viewBox="0 0 16 16" style="position:absolute;left:0;top:0"><path d="M3 8.3 L6.1 10.9 L13 4.6" fill="none" stroke="#fff" stroke-width="2" stroke-linecap="round" stroke-linejoin="round"/></svg></div>
<div style="position:absolute;left:1133.75px;top:354.28px;width:12.4px;height:12.4px;background:#2d8cf0;border-radius:2px;"><svg width="12.4" height="12.4" viewBox="0 0 16 16" style="position:absolute;left:0;top:0"><path d="M3 8.3 L6.1 10.9 L13 4.6" fill="none" stroke="#fff" stroke-width="2" stroke-linecap="round" stroke-linejoin="round"/></svg></div>
<div style="position:absolute;left:1169.55px;top:354.28px;width:12.4px;height:12.4px;background:#2d8cf0;border-radius:2px;"><svg width="12.4" height="12.4" viewBox="0 0 16 16" style="position:absolute;left:0;top:0"><path d="M3 8.3 L6.1 10.9 L13 4.6" fill="none" stroke="#fff" stroke-width="2" stroke-linecap="round" stroke-linejoin="round"/></svg></div>
<div style="position:absolute;left:590px;top:346.78px;width:107px;height:27.4px;box-sizing:border-box;border:1px solid #e5e5ea;border-radius:2.4px;background:#fff;"></div>
<div style="position:absolute;left:600.1px;top:352.88px;line-height:14px;height:14px;white-space:nowrap;color:#333639;">文本输入</div>
<svg style="position:absolute;left:677.5px;top:354.58px" width="11.8" height="11.8" viewBox="-5.9 -5.9 11.8 11.8"><path d="M-3.9 -1.95 L0 1.95 L3.9 -1.95" fill="none" stroke="#c2c2c2" stroke-width="1.05" stroke-linecap="round" stroke-linejoin="round"/></svg>
<div style="position:absolute;left:710px;top:346.78px;width:107px;height:27.4px;box-sizing:border-box;border:1px solid #e5e5ea;border-radius:2.4px;background:#fff;"></div>
<svg style="position:absolute;left:797.5px;top:354.58px" width="11.8" height="11.8" viewBox="-5.9 -5.9 11.8 11.8"><path d="M-3.9 -1.95 L0 1.95 L3.9 -1.95" fill="none" stroke="#c2c2c2" stroke-width="1.05" stroke-linecap="round" stroke-linejoin="round"/></svg>
<div style="position:absolute;left:829px;top:346.78px;width:107px;height:27.4px;box-sizing:border-box;border:1px solid #e5e5ea;border-radius:2.4px;background:#fff;"></div>
<div style="position:absolute;left:839.1px;top:352.88px;line-height:14px;height:14px;white-space:nowrap;color:#333639;">不验证</div>
<svg style="position:absolute;left:916.5px;top:354.58px" width="11.8" height="11.8" viewBox="-5.9 -5.9 11.8 11.8"><path d="M-3.9 -1.95 L0 1.95 L3.9 -1.95" fill="none" stroke="#c2c2c2" stroke-width="1.05" stroke-linecap="round" stroke-linejoin="round"/></svg>
<div style="position:absolute;left:949px;top:346.78px;width:130px;height:27.4px;box-sizing:border-box;border:1px solid #e5e5ea;border-radius:2.4px;background:#fff;"></div>
<div style="position:absolute;left:959.1px;top:352.88px;line-height:14px;height:14px;white-space:nowrap;color:#333639;">占一列位置</div>
<svg style="position:absolute;left:1059.5px;top:354.58px" width="11.8" height="11.8" viewBox="-5.9 -5.9 11.8 11.8"><path d="M-3.9 -1.95 L0 1.95 L3.9 -1.95" fill="none" stroke="#c2c2c2" stroke-width="1.05" stroke-linecap="round" stroke-linejoin="round"/></svg>
<div style="position:absolute;left:1200px;top:346.78px;width:95px;height:27.4px;box-sizing:border-box;border:1px solid #e5e5ea;border-radius:2.4px;background:#fff;"></div>
<div style="position:absolute;left:1209.6px;top:352.98px;line-height:14px;height:14px;white-space:nowrap;color:#333639;">LIKE %...%</div>
<svg style="position:absolute;left:1275.5px;top:354.58px" width="11.8" height="11.8" viewBox="-5.9 -5.9 11.8 11.8"><path d="M-3.9 -1.95 L0 1.95 L3.9 -1.95" fill="none" stroke="#c2c2c2" stroke-width="1.05" stroke-linecap="round" stroke-linejoin="round"/></svg>
<div style="position:absolute;left:1308px;top:346.78px;width:83px;height:27.4px;box-sizing:border-box;border:1px solid #e5e5ea;border-radius:2.4px;background:#fff;"></div>
<div style="position:absolute;left:1318.1px;top:352.88px;line-height:14px;height:14px;white-space:nowrap;color:#333639;">居左</div>
<svg style="position:absolute;left:1371.5px;top:354.58px" width="11.8" height="11.8" viewBox="-5.9 -5.9 11.8 11.8"><path d="M-3.9 -1.95 L0 1.95 L3.9 -1.95" fill="none" stroke="#c2c2c2" stroke-width="1.05" stroke-linecap="round" stroke-linejoin="round"/></svg>
<div style="position:absolute;left:1404px;top:346.78px;width:47px;height:27.4px;box-sizing:border-box;border:1px solid #e5e5ea;border-radius:2.4px;background:#fff;"></div>
<div style="position:absolute;left:1413.6px;top:352.98px;line-height:14px;height:14px;white-space:nowrap;color:#333639;">150</div>
<div style="position:absolute;left:207.4px;top:393.43px;line-height:14px;height:14px;white-space:nowrap;">3</div>
<div style="position:absolute;left:243.4px;top:393.43px;line-height:14px;height:14px;white-space:nowrap;letter-spacing:0.1px;">description</div>
<div style="position:absolute;left:363px;top:387.23px;width:107px;height:27.4px;box-sizing:border-box;border:1px solid #e5e5ea;border-radius:2.4px;background:#fff;"></div>
<div style="position:absolute;left:373.1px;top:393.33px;line-height:14px;height:14px;white-space:nowrap;color:#333639;">描述</div>
<div style="position:absolute;left:487.7px;top:394.73px;width:12.4px;height:12.4px;background:#2d8cf0;border-radius:2px;"><svg width="12.4" height="12.4" viewBox="0 0 16 16" style="position:absolute;left:0;top:0"><path d="M3 8.3 L6.1 10.9 L13 4.6" fill="none" stroke="#fff" stroke-width="2" stroke-linecap="round" stroke-linejoin="round"/></svg></div>
<div style="position:absolute;left:523.65px;top:394.73px;width:12.4px;height:12.4px;background:#2d8cf0;border-radius:2px;"><svg width="12.4" height="12.4" viewBox="0 0 16 16" style="position:absolute;left:0;top:0"><path d="M3 8.3 L6.1 10.9 L13 4.6" fill="none" stroke="#fff" stroke-width="2" stroke-linecap="round" stroke-linejoin="round"/></svg></div>
<div style="position:absolute;left:559.65px;top:394.73px;width:12.4px;height:12.4px;box-sizing:border-box;border:1px solid #e3e3e8;border-radius:2px;background:#fff;"></div>
<div style="position:absolute;left:1097.9px;top:394.73px;width:12.4px;height:12.4px;background:#2d8cf0;border-radius:2px;"><svg width="12.4" height="12.4" viewBox="0 0 16 16" style="position:absolute;left:0;top:0"><path d="M3 8.3 L6.1 10.9 L13 4.6" fill="none" stroke="#fff" stroke-width="2" stroke-linecap="round" stroke-linejoin="round"/></svg></div>
<div style="position:absolute;left:1133.75px;top:394.73px;width:12.4px;height:12.4px;background:#2d8cf0;border-radius:2px;"><svg width="12.4" height="12.4" viewBox="0 0 16 16" style="position:absolute;left:0;top:0"><path d="M3 8.3 L6.1 10.9 L13 4.6" fill="none" stroke="#fff" stroke-width="2" stroke-linecap="round" stroke-linejoin="round"/></svg></div>
<div style="position:absolute;left:1169.55px;top:394.73px;width:12.4px;height:12.4px;background:#2d8cf0;border-radius:2px;"><svg width="12.4" height="12.4" viewBox="0 0 16 16" style="position:absolute;left:0;top:0"><path d="M3 8.3 L6.1 10.9 L13 4.6" fill="none" stroke="#fff" stroke-width="2" stroke-linecap="round" stroke-linejoin="round"/></svg></div>
<div style="position:absolute;left:590px;top:387.23px;width:107px;height:27.4px;box-sizing:border-box;border:1px solid #e5e5ea;border-radius:2.4px;background:#fff;"></div>
<div style="position:absolute;left:600.1px;top:393.33px;line-height:14px;height:14px;white-space:nowrap;color:#333639;">文本域</div>
<svg style="position:absolute;left:677.5px;top:395.03px" width="11.8" height="11.8" viewBox="-5.9 -5.9 11.8 11.8"><path d="M-3.9 -1.95 L0 1.95 L3.9 -1.95" fill="none" stroke="#c2c2c2" stroke-width="1.05" stroke-linecap="round" stroke-linejoin="round"/></svg>
<div style="position:absolute;left:710px;top:387.23px;width:107px;height:27.4px;box-sizing:border-box;border:1px solid #e5e5ea;border-radius:2.4px;background:#fff;"></div>
<svg style="position:absolute;left:797.5px;top:395.03px" width="11.8" height="11.8" viewBox="-5.9 -5.9 11.8 11.8"><path d="M-3.9 -1.95 L0 1.95 L3.9 -1.95" fill="none" stroke="#c2c2c2" stroke-width="1.05" stroke-linecap="round" stroke-linejoin="round"/></svg>
<div style="position:absolute;left:829px;top:387.23px;width:107px;height:27.4px;box-sizing:border-box;border:1px solid #e5e5ea;border-radius:2.4px;background:#fff;"></div>
<div style="position:absolute;left:839.1px;top:393.33px;line-height:14px;height:14px;white-space:nowrap;color:#333639;">不验证</div>
<svg style="position:absolute;left:916.5px;top:395.03px" width="11.8" height="11.8" viewBox="-5.9 -5.9 11.8 11.8"><path d="M-3.9 -1.95 L0 1.95 L3.9 -1.95" fill="none" stroke="#c2c2c2" stroke-width="1.05" stroke-linecap="round" stroke-linejoin="round"/></svg>
<div style="position:absolute;left:949px;top:387.23px;width:130px;height:27.4px;box-sizing:border-box;border:1px solid #e5e5ea;border-radius:2.4px;background:#fff;"></div>
<div style="position:absolute;left:959.1px;top:393.33px;line-height:14px;height:14px;white-space:nowrap;color:#333639;">占两列位置</div>
<svg style="position:absolute;left:1059.5px;top:395.03px" width="11.8" height="11.8" viewBox="-5.9 -5.9 11.8 11.8"><path d="M-3.9 -1.95 L0 1.95 L3.9 -1.95" fill="none" stroke="#c2c2c2" stroke-width="1.05" stroke-linecap="round" stroke-linejoin="round"/></svg>
<div style="position:absolute;left:1200px;top:387.23px;width:95px;height:27.4px;box-sizing:border-box;border:1px solid #e5e5ea;border-radius:2.4px;background:#fff;"></div>
<div style="position:absolute;left:1209.6px;top:393.43px;line-height:14px;height:14px;white-space:nowrap;color:#333639;">LIKE %...%</div>
<svg style="position:absolute;left:1275.5px;top:395.03px" width="11.8" height="11.8" viewBox="-5.9 -5.9 11.8 11.8"><path d="M-3.9 -1.95 L0 1.95 L3.9 -1.95" fill="none" stroke="#c2c2c2" stroke-width="1.05" stroke-linecap="round" stroke-linejoin="round"/></svg>
<div style="position:absolute;left:1308px;top:387.23px;width:83px;height:27.4px;box-sizing:border-box;border:1px solid #e5e5ea;border-radius:2.4px;background:#fff;"></div>
<div style="position:absolute;left:1318.1px;top:393.33px;line-height:14px;height:14px;white-space:nowrap;color:#333639;">居左</div>
<svg style="position:absolute;left:1371.5px;top:395.03px" width="11.8" height="11.8" viewBox="-5.9 -5.9 11.8 11.8"><path d="M-3.9 -1.95 L0 1.95 L3.9 -1.95" fill="none" stroke="#c2c2c2" stroke-width="1.05" stroke-linecap="round" stroke-linejoin="round"/></svg>
<div style="position:absolute;left:1404px;top:387.23px;width:47px;height:27.4px;box-sizing:border-box;border:1px solid #e5e5ea;border-radius:2.4px;background:#fff;"></div>
<div style="position:absolute;left:1413.6px;top:393.43px;line-height:14px;height:14px;white-space:nowrap;color:#333639;">300</div>
<div style="position:absolute;left:207.4px;top:433.88px;line-height:14px;height:14px;white-space:nowrap;">4</div>
<div style="position:absolute;left:243.4px;top:433.88px;line-height:14px;height:14px;white-space:nowrap;letter-spacing:0.1px;">content</div>
<div style="position:absolute;left:363px;top:427.68px;width:107px;height:27.4px;box-sizing:border-box;border:1px solid #e5e5ea;border-radius:2.4px;background:#fff;"></div>
<div style="position:absolute;left:373.1px;top:433.78px;line-height:14px;height:14px;white-space:nowrap;color:#333639;">内容</div>
<div style="position:absolute;left:487.7px;top:435.18px;width:12.4px;height:12.4px;background:#2d8cf0;border-radius:2px;"><svg width="12.4" height="12.4" viewBox="0 0 16 16" style="position:absolute;left:0;top:0"><path d="M3 8.3 L6.1 10.9 L13 4.6" fill="none" stroke="#fff" stroke-width="2" stroke-linecap="round" stroke-linejoin="round"/></svg></div>
<div style="position:absolute;left:523.65px;top:435.18px;width:12.4px;height:12.4px;background:#2d8cf0;border-radius:2px;"><svg width="12.4" height="12.4" viewBox="0 0 16 16" style="position:absolute;left:0;top:0"><path d="M3 8.3 L6.1 10.9 L13 4.6" fill="none" stroke="#fff" stroke-width="2" stroke-linecap="round" stroke-linejoin="round"/></svg></div>
<div style="position:absolute;left:559.65px;top:435.18px;width:12.4px;height:12.4px;box-sizing:border-box;border:1px solid #e3e3e8;border-radius:2px;background:#fff;"></div>
<div style="position:absolute;left:1097.9px;top:435.18px;width:12.4px;height:12.4px;box-sizing:border-box;border:1px solid #e3e3e8;border-radius:2px;background:#fff;"></div>
<div style="position:absolute;left:1133.75px;top:435.18px;width:12.4px;height:12.4px;box-sizing:border-box;border:1px solid #e3e3e8;border-radius:2px;background:#fff;"></div>
<div style="position:absolute;left:1169.55px;top:435.18px;width:12.4px;height:12.4px;box-sizing:border-box;border:1px solid #e3e3e8;border-radius:2px;background:#fff;"></div>
<div style="position:absolute;left:590px;top:427.68px;width:107px;height:27.4px;box-sizing:border-box;border:1px solid #e5e5ea;border-radius:2.4px;background:#fff;"></div>
<div style="position:absolute;left:600.1px;top:433.78px;line-height:14px;height:14px;white-space:nowrap;color:#333639;">富文本</div>
<svg style="position:absolute;left:677.5px;top:435.48px" width="11.8" height="11.8" viewBox="-5.9 -5.9 11.8 11.8"><path d="M-3.9 -1.95 L0 1.95 L3.9 -1.95" fill="none" stroke="#c2c2c2" stroke-width="1.05" stroke-linecap="round" stroke-linejoin="round"/></svg>
<div style="position:absolute;left:710px;top:427.68px;width:107px;height:27.4px;box-sizing:border-box;border:1px solid #e5e5ea;border-radius:2.4px;background:#fff;"></div>
<svg style="position:absolute;left:797.5px;top:435.48px" width="11.8" height="11.8" viewBox="-5.9 -5.9 11.8 11.8"><path d="M-3.9 -1.95 L0 1.95 L3.9 -1.95" fill="none" stroke="#c2c2c2" stroke-width="1.05" stroke-linecap="round" stroke-linejoin="round"/></svg>
<div style="position:absolute;left:829px;top:427.68px;width:107px;height:27.4px;box-sizing:border-box;border:1px solid #e5e5ea;border-radius:2.4px;background:#fff;"></div>
<div style="position:absolute;left:839.1px;top:433.78px;line-height:14px;height:14px;white-space:nowrap;color:#333639;">不验证</div>
<svg style="position:absolute;left:916.5px;top:435.48px" width="11.8" height="11.8" viewBox="-5.9 -5.9 11.8 11.8"><path d="M-3.9 -1.95 L0 1.95 L3.9 -1.95" fill="none" stroke="#c2c2c2" stroke-width="1.05" stroke-linecap="round" stroke-linejoin="round"/></svg>
<div style="position:absolute;left:949px;top:427.68px;width:130px;height:27.4px;box-sizing:border-box;border:1px solid #e5e5ea;border-radius:2.4px;background:#fff;"></div>
<div style="position:absolute;left:959.1px;top:433.78px;line-height:14px;height:14px;white-space:nowrap;color:#333639;">占两列位置</div>
<svg style="position:absolute;left:1059.5px;top:435.48px" width="11.8" height="11.8" viewBox="-5.9 -5.9 11.8 11.8"><path d="M-3.9 -1.95 L0 1.95 L3.9 -1.95" fill="none" stroke="#c2c2c2" stroke-width="1.05" stroke-linecap="round" stroke-linejoin="round"/></svg>
<div style="position:absolute;left:1200px;top:427.68px;width:95px;height:27.4px;box-sizing:border-box;border:1px solid #e5e5ea;border-radius:2.4px;background:#fff;"></div>
<div style="position:absolute;left:1209.6px;top:433.88px;line-height:14px;height:14px;white-space:nowrap;color:#333639;">LIKE %...%</div>
<svg style="position:absolute;left:1275.5px;top:435.48px" width="11.8" height="11.8" viewBox="-5.9 -5.9 11.8 11.8"><path d="M-3.9 -1.95 L0 1.95 L3.9 -1.95" fill="none" stroke="#c2c2c2" stroke-width="1.05" stroke-linecap="round" stroke-linejoin="round"/></svg>
<div style="position:absolute;left:1308px;top:427.68px;width:83px;height:27.4px;box-sizing:border-box;border:1px solid #e5e5ea;border-radius:2.4px;background:#fff;"></div>
<div style="position:absolute;left:1318.1px;top:433.78px;line-height:14px;height:14px;white-space:nowrap;color:#333639;">居左</div>
<svg style="position:absolute;left:1371.5px;top:435.48px" width="11.8" height="11.8" viewBox="-5.9 -5.9 11.8 11.8"><path d="M-3.9 -1.95 L0 1.95 L3.9 -1.95" fill="none" stroke="#c2c2c2" stroke-width="1.05" stroke-linecap="round" stroke-linejoin="round"/></svg>
<div style="position:absolute;left:1404px;top:427.68px;width:47px;height:27.4px;box-sizing:border-box;border:1px solid #e5e5ea;border-radius:2.4px;background:#fff;"></div>
<div style="position:absolute;left:207.4px;top:474.33px;line-height:14px;height:14px;white-space:nowrap;">5</div>
<div style="position:absolute;left:243.4px;top:474.33px;line-height:14px;height:14px;white-space:nowrap;letter-spacing:0.1px;">image</div>
<div style="position:absolute;left:363px;top:468.13px;width:107px;height:27.4px;box-sizing:border-box;border:1px solid #e5e5ea;border-radius:2.4px;background:#fff;"></div>
<div style="position:absolute;left:373.1px;top:474.23px;line-height:14px;height:14px;white-space:nowrap;color:#333639;">单图</div>
<div style="position:absolute;left:487.7px;top:475.63px;width:12.4px;height:12.4px;background:#2d8cf0;border-radius:2px;"><svg width="12.4" height="12.4" viewBox="0 0 16 16" style="position:absolute;left:0;top:0"><path d="M3 8.3 L6.1 10.9 L13 4.6" fill="none" stroke="#fff" stroke-width="2" stroke-linecap="round" stroke-linejoin="round"/></svg></div>
<div style="position:absolute;left:523.65px;top:475.63px;width:12.4px;height:12.4px;box-sizing:border-box;border:1px solid #e3e3e8;border-radius:2px;background:#fff;"></div>
<div style="position:absolute;left:559.65px;top:475.63px;width:12.4px;height:12.4px;box-sizing:border-box;border:1px solid #e3e3e8;border-radius:2px;background:#fff;"></div>
<div style="position:absolute;left:1097.9px;top:475.63px;width:12.4px;height:12.4px;background:#2d8cf0;border-radius:2px;"><svg width="12.4" height="12.4" viewBox="0 0 16 16" style="position:absolute;left:0;top:0"><path d="M3 8.3 L6.1 10.9 L13 4.6" fill="none" stroke="#fff" stroke-width="2" stroke-linecap="round" stroke-linejoin="round"/></svg></div>
<div style="position:absolute;left:1133.75px;top:475.63px;width:12.4px;height:12.4px;background:#2d8cf0;border-radius:2px;"><svg width="12.4" height="12.4" viewBox="0 0 16 16" style="position:absolute;left:0;top:0"><path d="M3 8.3 L6.1 10.9 L13 4.6" fill="none" stroke="#fff" stroke-width="2" stroke-linecap="round" stroke-linejoin="round"/></svg></div>
<div style="position:absolute;left:1169.55px;top:475.63px;width:12.4px;height:12.4px;box-sizing:border-box;border:1px solid #e3e3e8;border-radius:2px;background:#fff;"></div>
<div style="position:absolute;left:590px;top:468.13px;width:107px;height:27.4px;box-sizing:border-box;border:1px solid #e5e5ea;border-radius:2.4px;background:#fff;"></div>
<div style="position:absolute;left:600.1px;top:474.23px;line-height:14px;height:14px;white-space:nowrap;color:#333639;">单图上传</div>
<svg style="position:absolute;left:677.5px;top:475.93px" width="11.8" height="11.8" viewBox="-5.9 -5.9 11.8 11.8"><path d="M-3.9 -1.95 L0 1.95 L3.9 -1.95" fill="none" stroke="#c2c2c2" stroke-width="1.05" stroke-linecap="round" stroke-linejoin="round"/></svg>
<div style="position:absolute;left:710px;top:468.13px;width:107px;height:27.4px;box-sizing:border-box;border:1px solid #e5e5ea;border-radius:2.4px;background:#fff;"></div>
<svg style="position:absolute;left:797.5px;top:475.93px" width="11.8" height="11.8" viewBox="-5.9 -5.9 11.8 11.8"><path d="M-3.9 -1.95 L0 1.95 L3.9 -1.95" fill="none" stroke="#c2c2c2" stroke-width="1.05" stroke-linecap="round" stroke-linejoin="round"/></svg>
<div style="position:absolute;left:829px;top:468.13px;width:107px;height:27.4px;box-sizing:border-box;border:1px solid #e5e5ea;border-radius:2.4px;background:#fff;"></div>
<div style="position:absolute;left:839.1px;top:474.23px;line-height:14px;height:14px;white-space:nowrap;color:#333639;">不验证</div>
<svg style="position:absolute;left:916.5px;top:475.93px" width="11.8" height="11.8" viewBox="-5.9 -5.9 11.8 11.8"><path d="M-3.9 -1.95 L0 1.95 L3.9 -1.95" fill="none" stroke="#c2c2c2" stroke-width="1.05" stroke-linecap="round" stroke-linejoin="round"/></svg>
<div style="position:absolute;left:949px;top:468.13px;width:130px;height:27.4px;box-sizing:border-box;border:1px solid #e5e5ea;border-radius:2.4px;background:#fff;"></div>
<div style="position:absolute;left:959.1px;top:474.23px;line-height:14px;height:14px;white-space:nowrap;color:#333639;">占一列位置</div>
<svg style="position:absolute;left:1059.5px;top:475.93px" width="11.8" height="11.8" viewBox="-5.9 -5.9 11.8 11.8"><path d="M-3.9 -1.95 L0 1.95 L3.9 -1.95" fill="none" stroke="#c2c2c2" stroke-width="1.05" stroke-linecap="round" stroke-linejoin="round"/></svg>
<div style="position:absolute;left:1200px;top:468.13px;width:95px;height:27.4px;box-sizing:border-box;border:1px solid #e5e5ea;border-radius:2.4px;background:#fff;"></div>
<div style="position:absolute;left:1209.6px;top:474.33px;line-height:14px;height:14px;white-space:nowrap;color:#333639;">LIKE</div>
<svg style="position:absolute;left:1275.5px;top:475.93px" width="11.8" height="11.8" viewBox="-5.9 -5.9 11.8 11.8"><path d="M-3.9 -1.95 L0 1.95 L3.9 -1.95" fill="none" stroke="#c2c2c2" stroke-width="1.05" stroke-linecap="round" stroke-linejoin="round"/></svg>
<div style="position:absolute;left:1308px;top:468.13px;width:83px;height:27.4px;box-sizing:border-box;border:1px solid #e5e5ea;border-radius:2.4px;background:#fff;"></div>
<div style="position:absolute;left:1318.1px;top:474.23px;line-height:14px;height:14px;white-space:nowrap;color:#333639;">居左</div>
<svg style="position:absolute;left:1371.5px;top:475.93px" width="11.8" height="11.8" viewBox="-5.9 -5.9 11.8 11.8"><path d="M-3.9 -1.95 L0 1.95 L3.9 -1.95" fill="none" stroke="#c2c2c2" stroke-width="1.05" stroke-linecap="round" stroke-linejoin="round"/></svg>
<div style="position:absolute;left:1404px;top:468.13px;width:47px;height:27.4px;box-sizing:border-box;border:1px solid #e5e5ea;border-radius:2.4px;background:#fff;"></div>
<div style="position:absolute;left:1413.6px;top:474.33px;line-height:14px;height:14px;white-space:nowrap;color:#333639;">100</div>
<div style="position:absolute;left:207.4px;top:514.77px;line-height:14px;height:14px;white-space:nowrap;">6</div>
<div style="position:absolute;left:243.4px;top:514.77px;line-height:14px;height:14px;white-space:nowrap;letter-spacing:0.1px;">attachfile</div>
<div style="position:absolute;left:363px;top:508.57px;width:107px;height:27.4px;box-sizing:border-box;border:1px solid #e5e5ea;border-radius:2.4px;background:#fff;"></div>
<div style="position:absolute;left:373.1px;top:514.67px;line-height:14px;height:14px;white-space:nowrap;color:#333639;">附件</div>
<div style="position:absolute;left:487.7px;top:516.07px;width:12.4px;height:12.4px;background:#2d8cf0;border-radius:2px;"><svg width="12.4" height="12.4" viewBox="0 0 16 16" style="position:absolute;left:0;top:0"><path d="M3 8.3 L6.1 10.9 L13 4.6" fill="none" stroke="#fff" stroke-width="2" stroke-linecap="round" stroke-linejoin="round"/></svg></div>
<div style="position:absolute;left:523.65px;top:516.07px;width:12.4px;height:12.4px;box-sizing:border-box;border:1px solid #e3e3e8;border-radius:2px;background:#fff;"></div>
<div style="position:absolute;left:559.65px;top:516.07px;width:12.4px;height:12.4px;box-sizing:border-box;border:1px solid #e3e3e8;border-radius:2px;background:#fff;"></div>
<div style="position:absolute;left:1097.9px;top:516.07px;width:12.4px;height:12.4px;background:#2d8cf0;border-radius:2px;"><svg width="12.4" height="12.4" viewBox="0 0 16 16" style="position:absolute;left:0;top:0"><path d="M3 8.3 L6.1 10.9 L13 4.6" fill="none" stroke="#fff" stroke-width="2" stroke-linecap="round" stroke-linejoin="round"/></svg></div>
<div style="position:absolute;left:1133.75px;top:516.07px;width:12.4px;height:12.4px;background:#2d8cf0;border-radius:2px;"><svg width="12.4" height="12.4" viewBox="0 0 16 16" style="position:absolute;left:0;top:0"><path d="M3 8.3 L6.1 10.9 L13 4.6" fill="none" stroke="#fff" stroke-width="2" stroke-linecap="round" stroke-linejoin="round"/></svg></div>
<div style="position:absolute;left:1169.55px;top:516.07px;width:12.4px;height:12.4px;box-sizing:border-box;border:1px solid #e3e3e8;border-radius:2px;background:#fff;"></div>
<div style="position:absolute;left:590px;top:508.57px;width:107px;height:27.4px;box-sizing:border-box;border:1px solid #e5e5ea;border-radius:2.4px;background:#fff;"></div>
<div style="position:absolute;left:600.1px;top:514.67px;line-height:14px;height:14px;white-space:nowrap;color:#333639;">单文件上传</div>
<svg style="position:absolute;left:677.5px;top:516.38px" width="11.8" height="11.8" viewBox="-5.9 -5.9 11.8 11.8"><path d="M-3.9 -1.95 L0 1.95 L3.9 -1.95" fill="none" stroke="#c2c2c2" stroke-width="1.05" stroke-linecap="round" stroke-linejoin="round"/></svg>
<div style="position:absolute;left:710px;top:508.57px;width:107px;height:27.4px;box-sizing:border-box;border:1px solid #e5e5ea;border-radius:2.4px;background:#fff;"></div>
<svg style="position:absolute;left:797.5px;top:516.38px" width="11.8" height="11.8" viewBox="-5.9 -5.9 11.8 11.8"><path d="M-3.9 -1.95 L0 1.95 L3.9 -1.95" fill="none" stroke="#c2c2c2" stroke-width="1.05" stroke-linecap="round" stroke-linejoin="round"/></svg>
<div style="position:absolute;left:829px;top:508.57px;width:107px;height:27.4px;box-sizing:border-box;border:1px solid #e5e5ea;border-radius:2.4px;background:#fff;"></div>
<div style="position:absolute;left:839.1px;top:514.67px;line-height:14px;height:14px;white-space:nowrap;color:#333639;">不验证</div>
<svg style="position:absolute;left:916.5px;top:516.38px" width="11.8" height="11.8" viewBox="-5.9 -5.9 11.8 11.8"><path d="M-3.9 -1.95 L0 1.95 L3.9 -1.95" fill="none" stroke="#c2c2c2" stroke-width="1.05" stroke-linecap="round" stroke-linejoin="round"/></svg>
<div style="position:absolute;left:949px;top:508.57px;width:130px;height:27.4px;box-sizing:border-box;border:1px solid #e5e5ea;border-radius:2.4px;background:#fff;"></div>
<div style="position:absolute;left:959.1px;top:514.67px;line-height:14px;height:14px;white-space:nowrap;color:#333639;">占一列位置</div>
<svg style="position:absolute;left:1059.5px;top:516.38px" width="11.8" height="11.8" viewBox="-5.9 -5.9 11.8 11.8"><path d="M-3.9 -1.95 L0 1.95 L3.9 -1.95" fill="none" stroke="#c2c2c2" stroke-width="1.05" stroke-linecap="round" stroke-linejoin="round"/></svg>
<div style="position:absolute;left:1200px;top:508.57px;width:95px;height:27.4px;box-sizing:border-box;border:1px solid #e5e5ea;border-radius:2.4px;background:#fff;"></div>
<div style="position:absolute;left:1209.6px;top:514.77px;line-height:14px;height:14px;white-space:nowrap;color:#333639;">LIKE</div>
<svg style="position:absolute;left:1275.5px;top:516.38px" width="11.8" height="11.8" viewBox="-5.9 -5.9 11.8 11.8"><path d="M-3.9 -1.95 L0 1.95 L3.9 -1.95" fill="none" stroke="#c2c2c2" stroke-width="1.05" stroke-linecap="round" stroke-linejoin="round"/></svg>
<div style="position:absolute;left:1308px;top:508.57px;width:83px;height:27.4px;box-sizing:border-box;border:1px solid #e5e5ea;border-radius:2.4px;background:#fff;"></div>
<div style="position:absolute;left:1318.1px;top:514.67px;line-height:14px;height:14px;white-space:nowrap;color:#333639;">居左</div>
<svg style="position:absolute;left:1371.5px;top:516.38px" width="11.8" height="11.8" viewBox="-5.9 -5.9 11.8 11.8"><path d="M-3.9 -1.95 L0 1.95 L3.9 -1.95" fill="none" stroke="#c2c2c2" stroke-width="1.05" stroke-linecap="round" stroke-linejoin="round"/></svg>
<div style="position:absolute;left:1404px;top:508.57px;width:47px;height:27.4px;box-sizing:border-box;border:1px solid #e5e5ea;border-radius:2.4px;background:#fff;"></div>
<div style="position:absolute;left:1413.6px;top:514.77px;line-height:14px;height:14px;white-space:nowrap;color:#333639;">100</div>
<div style="position:absolute;left:207.4px;top:555.23px;line-height:14px;height:14px;white-space:nowrap;">7</div>
<div style="position:absolute;left:243.4px;top:555.23px;line-height:14px;height:14px;white-space:nowrap;letter-spacing:0.1px;">city_id</div>
<div style="position:absolute;left:363px;top:549.02px;width:107px;height:27.4px;box-sizing:border-box;border:1px solid #e5e5ea;border-radius:2.4px;background:#fff;"></div>
<div style="position:absolute;left:373.1px;top:555.12px;line-height:14px;height:14px;white-space:nowrap;color:#333639;">所在城市</div>
<div style="position:absolute;left:487.7px;top:556.52px;width:12.4px;height:12.4px;background:#2d8cf0;border-radius:2px;"><svg width="12.4" height="12.4" viewBox="0 0 16 16" style="position:absolute;left:0;top:0"><path d="M3 8.3 L6.1 10.9 L13 4.6" fill="none" stroke="#fff" stroke-width="2" stroke-linecap="round" stroke-linejoin="round"/></svg></div>
<div style="position:absolute;left:523.65px;top:556.52px;width:12.4px;height:12.4px;box-sizing:border-box;border:1px solid #e3e3e8;border-radius:2px;background:#fff;"></div>
<div style="position:absolute;left:559.65px;top:556.52px;width:12.4px;height:12.4px;box-sizing:border-box;border:1px solid #e3e3e8;border-radius:2px;background:#fff;"></div>
<div style="position:absolute;left:1097.9px;top:556.52px;width:12.4px;height:12.4px;box-sizing:border-box;border:1px solid #e3e3e8;border-radius:2px;background:#fff;"></div>
<div style="position:absolute;left:1133.75px;top:556.52px;width:12.4px;height:12.4px;background:#2d8cf0;border-radius:2px;"><svg width="12.4" height="12.4" viewBox="0 0 16 16" style="position:absolute;left:0;top:0"><path d="M3 8.3 L6.1 10.9 L13 4.6" fill="none" stroke="#fff" stroke-width="2" stroke-linecap="round" stroke-linejoin="round"/></svg></div>
<div style="position:absolute;left:1169.55px;top:556.52px;width:12.4px;height:12.4px;box-sizing:border-box;border:1px solid #e3e3e8;border-radius:2px;background:#fff;"></div>
<div style="position:absolute;left:590px;top:549.02px;width:107px;height:27.4px;box-sizing:border-box;border:1px solid #e5e5ea;border-radius:2.4px;background:#fff;"></div>
<div style="position:absolute;left:600.1px;top:555.12px;line-height:14px;height:14px;white-space:nowrap;color:#333639;">省市区选择</div>
<svg style="position:absolute;left:677.5px;top:556.83px" width="11.8" height="11.8" viewBox="-5.9 -5.9 11.8 11.8"><path d="M-3.9 -1.95 L0 1.95 L3.9 -1.95" fill="none" stroke="#c2c2c2" stroke-width="1.05" stroke-linecap="round" stroke-linejoin="round"/></svg>
<div style="position:absolute;left:710px;top:549.02px;width:107px;height:27.4px;box-sizing:border-box;border:1px solid #e5e5ea;border-radius:2.4px;background:#fff;"></div>
<svg style="position:absolute;left:797.5px;top:556.83px" width="11.8" height="11.8" viewBox="-5.9 -5.9 11.8 11.8"><path d="M-3.9 -1.95 L0 1.95 L3.9 -1.95" fill="none" stroke="#c2c2c2" stroke-width="1.05" stroke-linecap="round" stroke-linejoin="round"/></svg>
<div style="position:absolute;left:829px;top:549.02px;width:107px;height:27.4px;box-sizing:border-box;border:1px solid #e5e5ea;border-radius:2.4px;background:#fff;"></div>
<div style="position:absolute;left:839.1px;top:555.12px;line-height:14px;height:14px;white-space:nowrap;color:#333639;">不验证</div>
<svg style="position:absolute;left:916.5px;top:556.83px" width="11.8" height="11.8" viewBox="-5.9 -5.9 11.8 11.8"><path d="M-3.9 -1.95 L0 1.95 L3.9 -1.95" fill="none" stroke="#c2c2c2" stroke-width="1.05" stroke-linecap="round" stroke-linejoin="round"/></svg>
<div style="position:absolute;left:949px;top:549.02px;width:130px;height:27.4px;box-sizing:border-box;border:1px solid #e5e5ea;border-radius:2.4px;background:#fff;"></div>
<div style="position:absolute;left:959.1px;top:555.12px;line-height:14px;height:14px;white-space:nowrap;color:#333639;">占一列位置</div>
<svg style="position:absolute;left:1059.5px;top:556.83px" width="11.8" height="11.8" viewBox="-5.9 -5.9 11.8 11.8"><path d="M-3.9 -1.95 L0 1.95 L3.9 -1.95" fill="none" stroke="#c2c2c2" stroke-width="1.05" stroke-linecap="round" stroke-linejoin="round"/></svg>
<div style="position:absolute;left:1200px;top:549.02px;width:95px;height:27.4px;box-sizing:border-box;border:1px solid #e5e5ea;border-radius:2.4px;background:#fff;"></div>
<div style="position:absolute;left:1209.6px;top:555.23px;line-height:14px;height:14px;white-space:nowrap;color:#333639;">=</div>
<svg style="position:absolute;left:1275.5px;top:556.83px" width="11.8" height="11.8" viewBox="-5.9 -5.9 11.8 11.8"><path d="M-3.9 -1.95 L0 1.95 L3.9 -1.95" fill="none" stroke="#c2c2c2" stroke-width="1.05" stroke-linecap="round" stroke-linejoin="round"/></svg>
<div style="position:absolute;left:1308px;top:549.02px;width:83px;height:27.4px;box-sizing:border-box;border:1px solid #e5e5ea;border-radius:2.4px;background:#fff;"></div>
<div style="position:absolute;left:1318.1px;top:555.12px;line-height:14px;height:14px;white-space:nowrap;color:#333639;">居左</div>
<svg style="position:absolute;left:1371.5px;top:556.83px" width="11.8" height="11.8" viewBox="-5.9 -5.9 11.8 11.8"><path d="M-3.9 -1.95 L0 1.95 L3.9 -1.95" fill="none" stroke="#c2c2c2" stroke-width="1.05" stroke-linecap="round" stroke-linejoin="round"/></svg>
<div style="position:absolute;left:1404px;top:549.02px;width:47px;height:27.4px;box-sizing:border-box;border:1px solid #e5e5ea;border-radius:2.4px;background:#fff;"></div>
<div style="position:absolute;left:207.4px;top:595.68px;line-height:14px;height:14px;white-space:nowrap;">8</div>
<div style="position:absolute;left:243.4px;top:595.68px;line-height:14px;height:14px;white-space:nowrap;letter-spacing:0.1px;">sort</div>
<div style="position:absolute;left:363px;top:589.48px;width:107px;height:27.4px;box-sizing:border-box;border:1px solid #e5e5ea;border-radius:2.4px;background:#fff;"></div>
<div style="position:absolute;left:373.1px;top:595.58px;line-height:14px;height:14px;white-space:nowrap;color:#333639;">排序</div>
<div style="position:absolute;left:487.7px;top:596.98px;width:12.4px;height:12.4px;background:#2d8cf0;border-radius:2px;"><svg width="12.4" height="12.4" viewBox="0 0 16 16" style="position:absolute;left:0;top:0"><path d="M3 8.3 L6.1 10.9 L13 4.6" fill="none" stroke="#fff" stroke-width="2" stroke-linecap="round" stroke-linejoin="round"/></svg></div>
<div style="position:absolute;left:523.65px;top:596.98px;width:12.4px;height:12.4px;background:#2d8cf0;border-radius:2px;"><svg width="12.4" height="12.4" viewBox="0 0 16 16" style="position:absolute;left:0;top:0"><path d="M3 8.3 L6.1 10.9 L13 4.6" fill="none" stroke="#fff" stroke-width="2" stroke-linecap="round" stroke-linejoin="round"/></svg></div>
<div style="position:absolute;left:559.65px;top:596.98px;width:12.4px;height:12.4px;box-sizing:border-box;border:1px solid #e3e3e8;border-radius:2px;background:#fff;"></div>
<div style="position:absolute;left:1097.9px;top:596.98px;width:12.4px;height:12.4px;background:#2d8cf0;border-radius:2px;"><svg width="12.4" height="12.4" viewBox="0 0 16 16" style="position:absolute;left:0;top:0"><path d="M3 8.3 L6.1 10.9 L13 4.6" fill="none" stroke="#fff" stroke-width="2" stroke-linecap="round" stroke-linejoin="round"/></svg></div>
<div style="position:absolute;left:1133.75px;top:596.98px;width:12.4px;height:12.4px;background:#2d8cf0;border-radius:2px;"><svg width="12.4" height="12.4" viewBox="0 0 16 16" style="position:absolute;left:0;top:0"><path d="M3 8.3 L6.1 10.9 L13 4.6" fill="none" stroke="#fff" stroke-width="2" stroke-linecap="round" stroke-linejoin="round"/></svg></div>
<div style="position:absolute;left:1169.55px;top:596.98px;width:12.4px;height:12.4px;box-sizing:border-box;border:1px solid #e3e3e8;border-radius:2px;background:#fff;"></div>
<div style="position:absolute;left:590px;top:589.48px;width:107px;height:27.4px;box-sizing:border-box;border:1px solid #e5e5ea;border-radius:2.4px;background:#fff;"></div>
<div style="position:absolute;left:600.1px;top:595.58px;line-height:14px;height:14px;white-space:nowrap;color:#333639;">数字输入</div>
<svg style="position:absolute;left:677.5px;top:597.28px" width="11.8" height="11.8" viewBox="-5.9 -5.9 11.8 11.8"><path d="M-3.9 -1.95 L0 1.95 L3.9 -1.95" fill="none" stroke="#c2c2c2" stroke-width="1.05" stroke-linecap="round" stroke-linejoin="round"/></svg>
<div style="position:absolute;left:710px;top:589.48px;width:107px;height:27.4px;box-sizing:border-box;border:1px solid #e5e5ea;border-radius:2.4px;background:#fff;"></div>
<svg style="position:absolute;left:797.5px;top:597.28px" width="11.8" height="11.8" viewBox="-5.9 -5.9 11.8 11.8"><path d="M-3.9 -1.95 L0 1.95 L3.9 -1.95" fill="none" stroke="#c2c2c2" stroke-width="1.05" stroke-linecap="round" stroke-linejoin="round"/></svg>
<div style="position:absolute;left:829px;top:589.48px;width:107px;height:27.4px;box-sizing:border-box;border:1px solid #e5e5ea;border-radius:2.4px;background:#fff;"></div>
<div style="position:absolute;left:839.1px;top:595.58px;line-height:14px;height:14px;white-space:nowrap;color:#333639;">不验证</div>
<svg style="position:absolute;left:916.5px;top:597.28px" width="11.8" height="11.8" viewBox="-5.9 -5.9 11.8 11.8"><path d="M-3.9 -1.95 L0 1.95 L3.9 -1.95" fill="none" stroke="#c2c2c2" stroke-width="1.05" stroke-linecap="round" stroke-linejoin="round"/></svg>
<div style="position:absolute;left:949px;top:589.48px;width:130px;height:27.4px;box-sizing:border-box;border:1px solid #e5e5ea;border-radius:2.4px;background:#fff;"></div>
<div style="position:absolute;left:959.1px;top:595.58px;line-height:14px;height:14px;white-space:nowrap;color:#333639;">占一列位置</div>
<svg style="position:absolute;left:1059.5px;top:597.28px" width="11.8" height="11.8" viewBox="-5.9 -5.9 11.8 11.8"><path d="M-3.9 -1.95 L0 1.95 L3.9 -1.95" fill="none" stroke="#c2c2c2" stroke-width="1.05" stroke-linecap="round" stroke-linejoin="round"/></svg>
<div style="position:absolute;left:1200px;top:589.48px;width:95px;height:27.4px;box-sizing:border-box;border:1px solid #e5e5ea;border-radius:2.4px;background:#fff;"></div>
<div style="position:absolute;left:1209.6px;top:595.68px;line-height:14px;height:14px;white-space:nowrap;color:#333639;">=</div>
<svg style="position:absolute;left:1275.5px;top:597.28px" width="11.8" height="11.8" viewBox="-5.9 -5.9 11.8 11.8"><path d="M-3.9 -1.95 L0 1.95 L3.9 -1.95" fill="none" stroke="#c2c2c2" stroke-width="1.05" stroke-linecap="round" stroke-linejoin="round"/></svg>
<div style="position:absolute;left:1308px;top:589.48px;width:83px;height:27.4px;box-sizing:border-box;border:1px solid #e5e5ea;border-radius:2.4px;background:#fff;"></div>
<div style="position:absolute;left:1318.1px;top:595.58px;line-height:14px;height:14px;white-space:nowrap;color:#333639;">居左</div>
<svg style="position:absolute;left:1371.5px;top:597.28px" width="11.8" height="11.8" viewBox="-5.9 -5.9 11.8 11.8"><path d="M-3.9 -1.95 L0 1.95 L3.9 -1.95" fill="none" stroke="#c2c2c2" stroke-width="1.05" stroke-linecap="round" stroke-linejoin="round"/></svg>
<div style="position:absolute;left:1404px;top:589.48px;width:47px;height:27.4px;box-sizing:border-box;border:1px solid #e5e5ea;border-radius:2.4px;background:#fff;"></div>
<div style="position:absolute;left:1413.6px;top:595.68px;line-height:14px;height:14px;white-space:nowrap;color:#333639;">100</div>
<div style="position:absolute;left:207.4px;top:636.13px;line-height:14px;height:14px;white-space:nowrap;">9</div>
<div style="position:absolute;left:243.4px;top:636.13px;line-height:14px;height:14px;white-space:nowrap;letter-spacing:0.1px;">switch</div>
<div style="position:absolute;left:363px;top:629.93px;width:107px;height:27.4px;box-sizing:border-box;border:1px solid #e5e5ea;border-radius:2.4px;background:#fff;"></div>
<div style="position:absolute;left:373.1px;top:636.03px;line-height:14px;height:14px;white-space:nowrap;color:#333639;">显示开关</div>
<div style="position:absolute;left:487.7px;top:637.43px;width:12.4px;height:12.4px;background:#2d8cf0;border-radius:2px;"><svg width="12.4" height="12.4" viewBox="0 0 16 16" style="position:absolute;left:0;top:0"><path d="M3 8.3 L6.1 10.9 L13 4.6" fill="none" stroke="#fff" stroke-width="2" stroke-linecap="round" stroke-linejoin="round"/></svg></div>
<div style="position:absolute;left:523.65px;top:637.43px;width:12.4px;height:12.4px;box-sizing:border-box;border:1px solid #e3e3e8;border-radius:2px;background:#fff;"></div>
<div style="position:absolute;left:559.65px;top:637.43px;width:12.4px;height:12.4px;box-sizing:border-box;border:1px solid #e3e3e8;border-radius:2px;background:#fff;"></div>
<div style="position:absolute;left:1097.9px;top:637.43px;width:12.4px;height:12.4px;background:#2d8cf0;border-radius:2px;"><svg width="12.4" height="12.4" viewBox="0 0 16 16" style="position:absolute;left:0;top:0"><path d="M3 8.3 L6.1 10.9 L13 4.6" fill="none" stroke="#fff" stroke-width="2" stroke-linecap="round" stroke-linejoin="round"/></svg></div>
<div style="position:absolute;left:1133.75px;top:637.43px;width:12.4px;height:12.4px;background:#2d8cf0;border-radius:2px;"><svg width="12.4" height="12.4" viewBox="0 0 16 16" style="position:absolute;left:0;top:0"><path d="M3 8.3 L6.1 10.9 L13 4.6" fill="none" stroke="#fff" stroke-width="2" stroke-linecap="round" stroke-linejoin="round"/></svg></div>
<div style="position:absolute;left:1169.55px;top:637.43px;width:12.4px;height:12.4px;box-sizing:border-box;border:1px solid #e3e3e8;border-radius:2px;background:#fff;"></div>
<div style="position:absolute;left:590px;top:629.93px;width:107px;height:27.4px;box-sizing:border-box;border:1px solid #e5e5ea;border-radius:2.4px;background:#fff;"></div>
<div style="position:absolute;left:600.1px;top:636.03px;line-height:14px;height:14px;white-space:nowrap;color:#333639;">开关</div>
<svg style="position:absolute;left:677.5px;top:637.73px" width="11.8" height="11.8" viewBox="-5.9 -5.9 11.8 11.8"><path d="M-3.9 -1.95 L0 1.95 L3.9 -1.95" fill="none" stroke="#c2c2c2" stroke-width="1.05" stroke-linecap="round" stroke-linejoin="round"/></svg>
<div style="position:absolute;left:710px;top:629.93px;width:107px;height:27.4px;box-sizing:border-box;border:1px solid #e5e5ea;border-radius:2.4px;background:#fff;"></div>
<svg style="position:absolute;left:797.5px;top:637.73px" width="11.8" height="11.8" viewBox="-5.9 -5.9 11.8 11.8"><path d="M-3.9 -1.95 L0 1.95 L3.9 -1.95" fill="none" stroke="#c2c2c2" stroke-width="1.05" stroke-linecap="round" stroke-linejoin="round"/></svg>
<div style="position:absolute;left:829px;top:629.93px;width:107px;height:27.4px;box-sizing:border-box;border:1px solid #e5e5ea;border-radius:2.4px;background:#fff;"></div>
<div style="position:absolute;left:839.1px;top:636.03px;line-height:14px;height:14px;white-space:nowrap;color:#333639;">不验证</div>
<svg style="position:absolute;left:916.5px;top:637.73px" width="11.8" height="11.8" viewBox="-5.9 -5.9 11.8 11.8"><path d="M-3.9 -1.95 L0 1.95 L3.9 -1.95" fill="none" stroke="#c2c2c2" stroke-width="1.05" stroke-linecap="round" stroke-linejoin="round"/></svg>
<div style="position:absolute;left:949px;top:629.93px;width:130px;height:27.4px;box-sizing:border-box;border:1px solid #e5e5ea;border-radius:2.4px;background:#fff;"></div>
<div style="position:absolute;left:959.1px;top:636.03px;line-height:14px;height:14px;white-space:nowrap;color:#333639;">占一列位置</div>
<svg style="position:absolute;left:1059.5px;top:637.73px" width="11.8" height="11.8" viewBox="-5.9 -5.9 11.8 11.8"><path d="M-3.9 -1.95 L0 1.95 L3.9 -1.95" fill="none" stroke="#c2c2c2" stroke-width="1.05" stroke-linecap="round" stroke-linejoin="round"/></svg>
<div style="position:absolute;left:1200px;top:629.93px;width:95px;height:27.4px;box-sizing:border-box;border:1px solid #e5e5ea;border-radius:2.4px;background:#fff;"></div>
<div style="position:absolute;left:1209.6px;top:636.13px;line-height:14px;height:14px;white-space:nowrap;color:#333639;">=</div>
<svg style="position:absolute;left:1275.5px;top:637.73px" width="11.8" height="11.8" viewBox="-5.9 -5.9 11.8 11.8"><path d="M-3.9 -1.95 L0 1.95 L3.9 -1.95" fill="none" stroke="#c2c2c2" stroke-width="1.05" stroke-linecap="round" stroke-linejoin="round"/></svg>
<div style="position:absolute;left:1308px;top:629.93px;width:83px;height:27.4px;box-sizing:border-box;border:1px solid #e5e5ea;border-radius:2.4px;background:#fff;"></div>
<div style="position:absolute;left:1318.1px;top:636.03px;line-height:14px;height:14px;white-space:nowrap;color:#333639;">居左</div>
<svg style="position:absolute;left:1371.5px;top:637.73px" width="11.8" height="11.8" viewBox="-5.9 -5.9 11.8 11.8"><path d="M-3.9 -1.95 L0 1.95 L3.9 -1.95" fill="none" stroke="#c2c2c2" stroke-width="1.05" stroke-linecap="round" stroke-linejoin="round"/></svg>
<div style="position:absolute;left:1404px;top:629.93px;width:47px;height:27.4px;box-sizing:border-box;border:1px solid #e5e5ea;border-radius:2.4px;background:#fff;"></div>
<div style="position:absolute;left:1413.6px;top:636.13px;line-height:14px;height:14px;white-space:nowrap;color:#333639;">150</div>
<div style="position:absolute;left:207.4px;top:676.58px;line-height:14px;height:14px;white-space:nowrap;">10</div>
<div style="position:absolute;left:243.4px;top:676.58px;line-height:14px;height:14px;white-space:nowrap;letter-spacing:0.1px;">status</div>
<div style="position:absolute;left:363px;top:670.38px;width:107px;height:27.4px;box-sizing:border-box;border:1px solid #e5e5ea;border-radius:2.4px;background:#fff;"></div>
<div style="position:absolute;left:373.1px;top:676.48px;line-height:14px;height:14px;white-space:nowrap;color:#333639;">状态</div>
<div style="position:absolute;left:487.7px;top:677.88px;width:12.4px;height:12.4px;background:#2d8cf0;border-radius:2px;"><svg width="12.4" height="12.4" viewBox="0 0 16 16" style="position:absolute;left:0;top:0"><path d="M3 8.3 L6.1 10.9 L13 4.6" fill="none" stroke="#fff" stroke-width="2" stroke-linecap="round" stroke-linejoin="round"/></svg></div>
<div style="position:absolute;left:523.65px;top:677.88px;width:12.4px;height:12.4px;box-sizing:border-box;border:1px solid #e3e3e8;border-radius:2px;background:#fff;"></div>
<div style="position:absolute;left:559.65px;top:677.88px;width:12.4px;height:12.4px;box-sizing:border-box;border:1px solid #e3e3e8;border-radius:2px;background:#fff;"></div>
<div style="position:absolute;left:1097.9px;top:677.88px;width:12.4px;height:12.4px;background:#2d8cf0;border-radius:2px;"><svg width="12.4" height="12.4" viewBox="0 0 16 16" style="position:absolute;left:0;top:0"><path d="M3 8.3 L6.1 10.9 L13 4.6" fill="none" stroke="#fff" stroke-width="2" stroke-linecap="round" stroke-linejoin="round"/></svg></div>
<div style="position:absolute;left:1133.75px;top:677.88px;width:12.4px;height:12.4px;background:#2d8cf0;border-radius:2px;"><svg width="12.4" height="12.4" viewBox="0 0 16 16" style="position:absolute;left:0;top:0"><path d="M3 8.3 L6.1 10.9 L13 4.6" fill="none" stroke="#fff" stroke-width="2" stroke-linecap="round" stroke-linejoin="round"/></svg></div>
<div style="position:absolute;left:1169.55px;top:677.88px;width:12.4px;height:12.4px;background:#2d8cf0;border-radius:2px;"><svg width="12.4" height="12.4" viewBox="0 0 16 16" style="position:absolute;left:0;top:0"><path d="M3 8.3 L6.1 10.9 L13 4.6" fill="none" stroke="#fff" stroke-width="2" stroke-linecap="round" stroke-linejoin="round"/></svg></div>
<div style="position:absolute;left:590px;top:670.38px;width:107px;height:27.4px;box-sizing:border-box;border:1px solid #e5e5ea;border-radius:2.4px;background:#fff;"></div>
<div style="position:absolute;left:600.1px;top:676.48px;line-height:14px;height:14px;white-space:nowrap;color:#333639;">单选下拉框</div>
<svg style="position:absolute;left:677.5px;top:678.18px" width="11.8" height="11.8" viewBox="-5.9 -5.9 11.8 11.8"><path d="M-3.9 -1.95 L0 1.95 L3.9 -1.95" fill="none" stroke="#c2c2c2" stroke-width="1.05" stroke-linecap="round" stroke-linejoin="round"/></svg>
<div style="position:absolute;left:710px;top:670.38px;width:107px;height:27.4px;box-sizing:border-box;border:1px solid #e5e5ea;border-radius:2.4px;background:#fff;"></div>
<div style="position:absolute;left:720.1px;top:676.48px;line-height:14px;height:14px;white-space:nowrap;color:#333639;">系统状态</div>
<svg style="position:absolute;left:797.5px;top:678.18px" width="11.8" height="11.8" viewBox="-5.9 -5.9 11.8 11.8"><path d="M-3.9 -1.95 L0 1.95 L3.9 -1.95" fill="none" stroke="#c2c2c2" stroke-width="1.05" stroke-linecap="round" stroke-linejoin="round"/></svg>
<div style="position:absolute;left:829px;top:670.38px;width:107px;height:27.4px;box-sizing:border-box;border:1px solid #e5e5ea;border-radius:2.4px;background:#fff;"></div>
<div style="position:absolute;left:839.1px;top:676.48px;line-height:14px;height:14px;white-space:nowrap;color:#333639;">不验证</div>
<svg style="position:absolute;left:916.5px;top:678.18px" width="11.8" height="11.8" viewBox="-5.9 -5.9 11.8 11.8"><path d="M-3.9 -1.95 L0 1.95 L3.9 -1.95" fill="none" stroke="#c2c2c2" stroke-width="1.05" stroke-linecap="round" stroke-linejoin="round"/></svg>
<div style="position:absolute;left:949px;top:670.38px;width:130px;height:27.4px;box-sizing:border-box;border:1px solid #e5e5ea;border-radius:2.4px;background:#fff;"></div>
<div style="position:absolute;left:959.1px;top:676.48px;line-height:14px;height:14px;white-space:nowrap;color:#333639;">占一列位置</div>
<svg style="position:absolute;left:1059.5px;top:678.18px" width="11.8" height="11.8" viewBox="-5.9 -5.9 11.8 11.8"><path d="M-3.9 -1.95 L0 1.95 L3.9 -1.95" fill="none" stroke="#c2c2c2" stroke-width="1.05" stroke-linecap="round" stroke-linejoin="round"/></svg>
<div style="position:absolute;left:1200px;top:670.38px;width:95px;height:27.4px;box-sizing:border-box;border:1px solid #e5e5ea;border-radius:2.4px;background:#fff;"></div>
<div style="position:absolute;left:1209.6px;top:676.58px;line-height:14px;height:14px;white-space:nowrap;color:#333639;">=</div>
<svg style="position:absolute;left:1275.5px;top:678.18px" width="11.8" height="11.8" viewBox="-5.9 -5.9 11.8 11.8"><path d="M-3.9 -1.95 L0 1.95 L3.9 -1.95" fill="none" stroke="#c2c2c2" stroke-width="1.05" stroke-linecap="round" stroke-linejoin="round"/></svg>
<div style="position:absolute;left:1308px;top:670.38px;width:83px;height:27.4px;box-sizing:border-box;border:1px solid #e5e5ea;border-radius:2.4px;background:#fff;"></div>
<div style="position:absolute;left:1318.1px;top:676.48px;line-height:14px;height:14px;white-space:nowrap;color:#333639;">居左</div>
<svg style="position:absolute;left:1371.5px;top:678.18px" width="11.8" height="11.8" viewBox="-5.9 -5.9 11.8 11.8"><path d="M-3.9 -1.95 L0 1.95 L3.9 -1.95" fill="none" stroke="#c2c2c2" stroke-width="1.05" stroke-linecap="round" stroke-linejoin="round"/></svg>
<div style="position:absolute;left:1404px;top:670.38px;width:47px;height:27.4px;box-sizing:border-box;border:1px solid #e5e5ea;border-radius:2.4px;background:#fff;"></div>
<div style="position:absolute;left:1413.6px;top:676.58px;line-height:14px;height:14px;white-space:nowrap;color:#333639;">100</div>
<div style="position:absolute;left:207.4px;top:717.02px;line-height:14px;height:14px;white-space:nowrap;">11</div>
<div style="position:absolute;left:243.4px;top:717.02px;line-height:14px;height:14px;white-space:nowrap;letter-spacing:0.1px;">created_by</div>
<div style="position:absolute;left:363px;top:710.82px;width:107px;height:27.4px;box-sizing:border-box;border:1px solid #e5e5ea;border-radius:2.4px;background:#fff;"></div>
<div style="position:absolute;left:373.1px;top:716.92px;line-height:14px;height:14px;white-space:nowrap;color:#333639;">创建者</div>
<div style="position:absolute;left:487.7px;top:718.32px;width:12.4px;height:12.4px;box-sizing:border-box;border:1px solid #e3e3e8;border-radius:2px;background:#f6f6f9;"></div>
<div style="position:absolute;left:523.65px;top:718.32px;width:12.4px;height:12.4px;box-sizing:border-box;border:1px solid #e3e3e8;border-radius:2px;background:#fff;"></div>
<div style="position:absolute;left:559.65px;top:718.32px;width:12.4px;height:12.4px;box-sizing:border-box;border:1px solid #e3e3e8;border-radius:2px;background:#fff;"></div>
<div style="position:absolute;left:1097.9px;top:718.32px;width:12.4px;height:12.4px;background:#2d8cf0;border-radius:2px;"><svg width="12.4" height="12.4" viewBox="0 0 16 16" style="position:absolute;left:0;top:0"><path d="M3 8.3 L6.1 10.9 L13 4.6" fill="none" stroke="#fff" stroke-width="2" stroke-linecap="round" stroke-linejoin="round"/></svg></div>
<div style="position:absolute;left:1133.75px;top:718.32px;width:12.4px;height:12.4px;background:#2d8cf0;border-radius:2px;"><svg width="12.4" height="12.4" viewBox="0 0 16 16" style="position:absolute;left:0;top:0"><path d="M3 8.3 L6.1 10.9 L13 4.6" fill="none" stroke="#fff" stroke-width="2" stroke-linecap="round" stroke-linejoin="round"/></svg></div>
<div style="position:absolute;left:1169.55px;top:718.32px;width:12.4px;height:12.4px;background:#2d8cf0;border-radius:2px;"><svg width="12.4" height="12.4" viewBox="0 0 16 16" style="position:absolute;left:0;top:0"><path d="M3 8.3 L6.1 10.9 L13 4.6" fill="none" stroke="#fff" stroke-width="2" stroke-linecap="round" stroke-linejoin="round"/></svg></div>
<div style="position:absolute;left:590px;top:710.82px;width:107px;height:27.4px;box-sizing:border-box;border:1px solid #e5e5ea;border-radius:2.4px;background:#fff;"></div>
<div style="position:absolute;left:600.1px;top:716.92px;line-height:14px;height:14px;white-space:nowrap;color:#333639;">数字输入</div>
<svg style="position:absolute;left:677.5px;top:718.62px" width="11.8" height="11.8" viewBox="-5.9 -5.9 11.8 11.8"><path d="M-3.9 -1.95 L0 1.95 L3.9 -1.95" fill="none" stroke="#c2c2c2" stroke-width="1.05" stroke-linecap="round" stroke-linejoin="round"/></svg>
<div style="position:absolute;left:710px;top:710.82px;width:107px;height:27.4px;box-sizing:border-box;border:1px solid #e5e5ea;border-radius:2.4px;background:#fff;"></div>
<svg style="position:absolute;left:797.5px;top:718.62px" width="11.8" height="11.8" viewBox="-5.9 -5.9 11.8 11.8"><path d="M-3.9 -1.95 L0 1.95 L3.9 -1.95" fill="none" stroke="#c2c2c2" stroke-width="1.05" stroke-linecap="round" stroke-linejoin="round"/></svg>
<div style="position:absolute;left:829px;top:710.82px;width:107px;height:27.4px;box-sizing:border-box;border:1px solid #e5e5ea;border-radius:2.4px;background:#fff;"></div>
<div style="position:absolute;left:839.1px;top:716.92px;line-height:14px;height:14px;white-space:nowrap;color:#333639;">不验证</div>
<svg style="position:absolute;left:916.5px;top:718.62px" width="11.8" height="11.8" viewBox="-5.9 -5.9 11.8 11.8"><path d="M-3.9 -1.95 L0 1.95 L3.9 -1.95" fill="none" stroke="#c2c2c2" stroke-width="1.05" stroke-linecap="round" stroke-linejoin="round"/></svg>
<div style="position:absolute;left:949px;top:710.82px;width:130px;height:27.4px;box-sizing:border-box;border:1px solid #e5e5ea;border-radius:2.4px;background:#fff;"></div>
<div style="position:absolute;left:959.1px;top:716.92px;line-height:14px;height:14px;white-space:nowrap;color:#333639;">占一列位置</div>
<svg style="position:absolute;left:1059.5px;top:718.62px" width="11.8" height="11.8" viewBox="-5.9 -5.9 11.8 11.8"><path d="M-3.9 -1.95 L0 1.95 L3.9 -1.95" fill="none" stroke="#c2c2c2" stroke-width="1.05" stroke-linecap="round" stroke-linejoin="round"/></svg>
<div style="position:absolute;left:1200px;top:710.82px;width:95px;height:27.4px;box-sizing:border-box;border:1px solid #e5e5ea;border-radius:2.4px;background:#fff;"></div>
<div style="position:absolute;left:1209.6px;top:717.02px;line-height:14px;height:14px;white-space:nowrap;color:#333639;">=</div>
<svg style="position:absolute;left:1275.5px;top:718.62px" width="11.8" height="11.8" viewBox="-5.9 -5.9 11.8 11.8"><path d="M-3.9 -1.95 L0 1.95 L3.9 -1.95" fill="none" stroke="#c2c2c2" stroke-width="1.05" stroke-linecap="round" stroke-linejoin="round"/></svg>
<div style="position:absolute;left:1308px;top:710.82px;width:83px;height:27.4px;box-sizing:border-box;border:1px solid #e5e5ea;border-radius:2.4px;background:#fff;"></div>
<div style="position:absolute;left:1318.1px;top:716.92px;line-height:14px;height:14px;white-space:nowrap;color:#333639;">居左</div>
<svg style="position:absolute;left:1371.5px;top:718.62px" width="11.8" height="11.8" viewBox="-5.9 -5.9 11.8 11.8"><path d="M-3.9 -1.95 L0 1.95 L3.9 -1.95" fill="none" stroke="#c2c2c2" stroke-width="1.05" stroke-linecap="round" stroke-linejoin="round"/></svg>
<div style="position:absolute;left:1404px;top:710.82px;width:47px;height:27.4px;box-sizing:border-box;border:1px solid #e5e5ea;border-radius:2.4px;background:#fff;"></div>
<div style="position:absolute;left:1413.6px;top:717.02px;line-height:14px;height:14px;white-space:nowrap;color:#333639;">150</div>
<div style="position:absolute;left:207.4px;top:757.48px;line-height:14px;height:14px;white-space:nowrap;">12</div>
<div style="position:absolute;left:243.4px;top:757.48px;line-height:14px;height:14px;white-space:nowrap;letter-spacing:0.1px;">created_at</div>
<div style="position:absolute;left:363px;top:751.27px;width:107px;height:27.4px;box-sizing:border-box;border:1px solid #e5e5ea;border-radius:2.4px;background:#fff;"></div>
<div style="position:absolute;left:373.1px;top:757.38px;line-height:14px;height:14px;white-space:nowrap;color:#333639;">创建时间</div>
<div style="position:absolute;left:487.7px;top:758.77px;width:12.4px;height:12.4px;box-sizing:border-box;border:1px solid #e3e3e8;border-radius:2px;background:#f6f6f9;"></div>
<div style="position:absolute;left:523.65px;top:758.77px;width:12.4px;height:12.4px;box-sizing:border-box;border:1px solid #e3e3e8;border-radius:2px;background:#fff;"></div>
<div style="position:absolute;left:559.65px;top:758.77px;width:12.4px;height:12.4px;box-sizing:border-box;border:1px solid #e3e3e8;border-radius:2px;background:#fff;"></div>
<div style="position:absolute;left:1097.9px;top:758.77px;width:12.4px;height:12.4px;background:#2d8cf0;border-radius:2px;"><svg width="12.4" height="12.4" viewBox="0 0 16 16" style="position:absolute;left:0;top:0"><path d="M3 8.3 L6.1 10.9 L13 4.6" fill="none" stroke="#fff" stroke-width="2" stroke-linecap="round" stroke-linejoin="round"/></svg></div>
<div style="position:absolute;left:1133.75px;top:758.77px;width:12.4px;height:12.4px;background:#2d8cf0;border-radius:2px;"><svg width="12.4" height="12.4" viewBox="0 0 16 16" style="position:absolute;left:0;top:0"><path d="M3 8.3 L6.1 10.9 L13 4.6" fill="none" stroke="#fff" stroke-width="2" stroke-linecap="round" stroke-linejoin="round"/></svg></div>
<div style="position:absolute;left:1169.55px;top:758.77px;width:12.4px;height:12.4px;background:#2d8cf0;border-radius:2px;"><svg width="12.4" height="12.4" viewBox="0 0 16 16" style="position:absolute;left:0;top:0"><path d="M3 8.3 L6.1 10.9 L13 4.6" fill="none" stroke="#fff" stroke-width="2" stroke-linecap="round" stroke-linejoin="round"/></svg></div>
<div style="position:absolute;left:590px;top:751.27px;width:107px;height:27.4px;box-sizing:border-box;border:1px solid #e5e5ea;border-radius:2.4px;background:#fff;"></div>
<div style="position:absolute;left:600.1px;top:757.38px;line-height:14px;height:14px;white-space:nowrap;color:#333639;">日期选择</div>
<svg style="position:absolute;left:677.5px;top:759.08px" width="11.8" height="11.8" viewBox="-5.9 -5.9 11.8 11.8"><path d="M-3.9 -1.95 L0 1.95 L3.9 -1.95" fill="none" stroke="#c2c2c2" stroke-width="1.05" stroke-linecap="round" stroke-linejoin="round"/></svg>
<div style="position:absolute;left:710px;top:751.27px;width:107px;height:27.4px;box-sizing:border-box;border:1px solid #e5e5ea;border-radius:2.4px;background:#fff;"></div>
<svg style="position:absolute;left:797.5px;top:759.08px" width="11.8" height="11.8" viewBox="-5.9 -5.9 11.8 11.8"><path d="M-3.9 -1.95 L0 1.95 L3.9 -1.95" fill="none" stroke="#c2c2c2" stroke-width="1.05" stroke-linecap="round" stroke-linejoin="round"/></svg>
<div style="position:absolute;left:829px;top:751.27px;width:107px;height:27.4px;box-sizing:border-box;border:1px solid #e5e5ea;border-radius:2.4px;background:#fff;"></div>
<div style="position:absolute;left:839.1px;top:757.38px;line-height:14px;height:14px;white-space:nowrap;color:#333639;">不验证</div>
<svg style="position:absolute;left:916.5px;top:759.08px" width="11.8" height="11.8" viewBox="-5.9 -5.9 11.8 11.8"><path d="M-3.9 -1.95 L0 1.95 L3.9 -1.95" fill="none" stroke="#c2c2c2" stroke-width="1.05" stroke-linecap="round" stroke-linejoin="round"/></svg>
<div style="position:absolute;left:949px;top:751.27px;width:130px;height:27.4px;box-sizing:border-box;border:1px solid #e5e5ea;border-radius:2.4px;background:#fff;"></div>
<div style="position:absolute;left:959.1px;top:757.38px;line-height:14px;height:14px;white-space:nowrap;color:#333639;">占一列位置</div>
<svg style="position:absolute;left:1059.5px;top:759.08px" width="11.8" height="11.8" viewBox="-5.9 -5.9 11.8 11.8"><path d="M-3.9 -1.95 L0 1.95 L3.9 -1.95" fill="none" stroke="#c2c2c2" stroke-width="1.05" stroke-linecap="round" stroke-linejoin="round"/></svg>
<div style="position:absolute;left:1200px;top:751.27px;width:95px;height:27.4px;box-sizing:border-box;border:1px solid #e5e5ea;border-radius:2.4px;background:#fff;"></div>
<div style="position:absolute;left:1209.6px;top:757.48px;line-height:14px;height:14px;white-space:nowrap;color:#333639;">=</div>
<svg style="position:absolute;left:1275.5px;top:759.08px" width="11.8" height="11.8" viewBox="-5.9 -5.9 11.8 11.8"><path d="M-3.9 -1.95 L0 1.95 L3.9 -1.95" fill="none" stroke="#c2c2c2" stroke-width="1.05" stroke-linecap="round" stroke-linejoin="round"/></svg>
<div style="position:absolute;left:1308px;top:751.27px;width:83px;height:27.4px;box-sizing:border-box;border:1px solid #e5e5ea;border-radius:2.4px;background:#fff;"></div>
<div style="position:absolute;left:1318.1px;top:757.38px;line-height:14px;height:14px;white-space:nowrap;color:#333639;">居左</div>
<svg style="position:absolute;left:1371.5px;top:759.08px" width="11.8" height="11.8" viewBox="-5.9 -5.9 11.8 11.8"><path d="M-3.9 -1.95 L0 1.95 L3.9 -1.95" fill="none" stroke="#c2c2c2" stroke-width="1.05" stroke-linecap="round" stroke-linejoin="round"/></svg>
<div style="position:absolute;left:1404px;top:751.27px;width:47px;height:27.4px;box-sizing:border-box;border:1px solid #e5e5ea;border-radius:2.4px;background:#fff;"></div>
<div style="position:absolute;left:1413.6px;top:757.48px;line-height:14px;height:14px;white-space:nowrap;color:#333639;">150</div>
<div style="position:absolute;left:0;top:0;width:1511px;height:758px;overflow:hidden;"><div style="position:absolute;left:-300px;top:775px;width:1730px;height:140px;border-radius:60px;background:#000;box-shadow:0 0 50px 10px rgba(0,0,0,0.22);"></div></div>
<div style="position:absolute;left:0px;top:0px;width:1px;height:758px;background:rgba(255,255,255,0.09);"></div>
<div style="position:absolute;left:1px;top:0px;width:1px;height:758px;background:rgba(0,0,0,0.2);"></div>
<svg style="position:absolute;left:0px;top:748px;" width="12" height="10" viewBox="0 748 12 10"><path d="M0 750.5 A9 9 0 0 0 9 759.5 L0 759.5 Z" fill="#000"/></svg>
<svg style="position:absolute;left:1499px;top:748px;" width="12" height="10" viewBox="1499 748 12 10"><path d="M1511 753 A6 6 0 0 1 1505 759 L1511 759 Z" fill="#000"/></svg>
</div></body></html>
